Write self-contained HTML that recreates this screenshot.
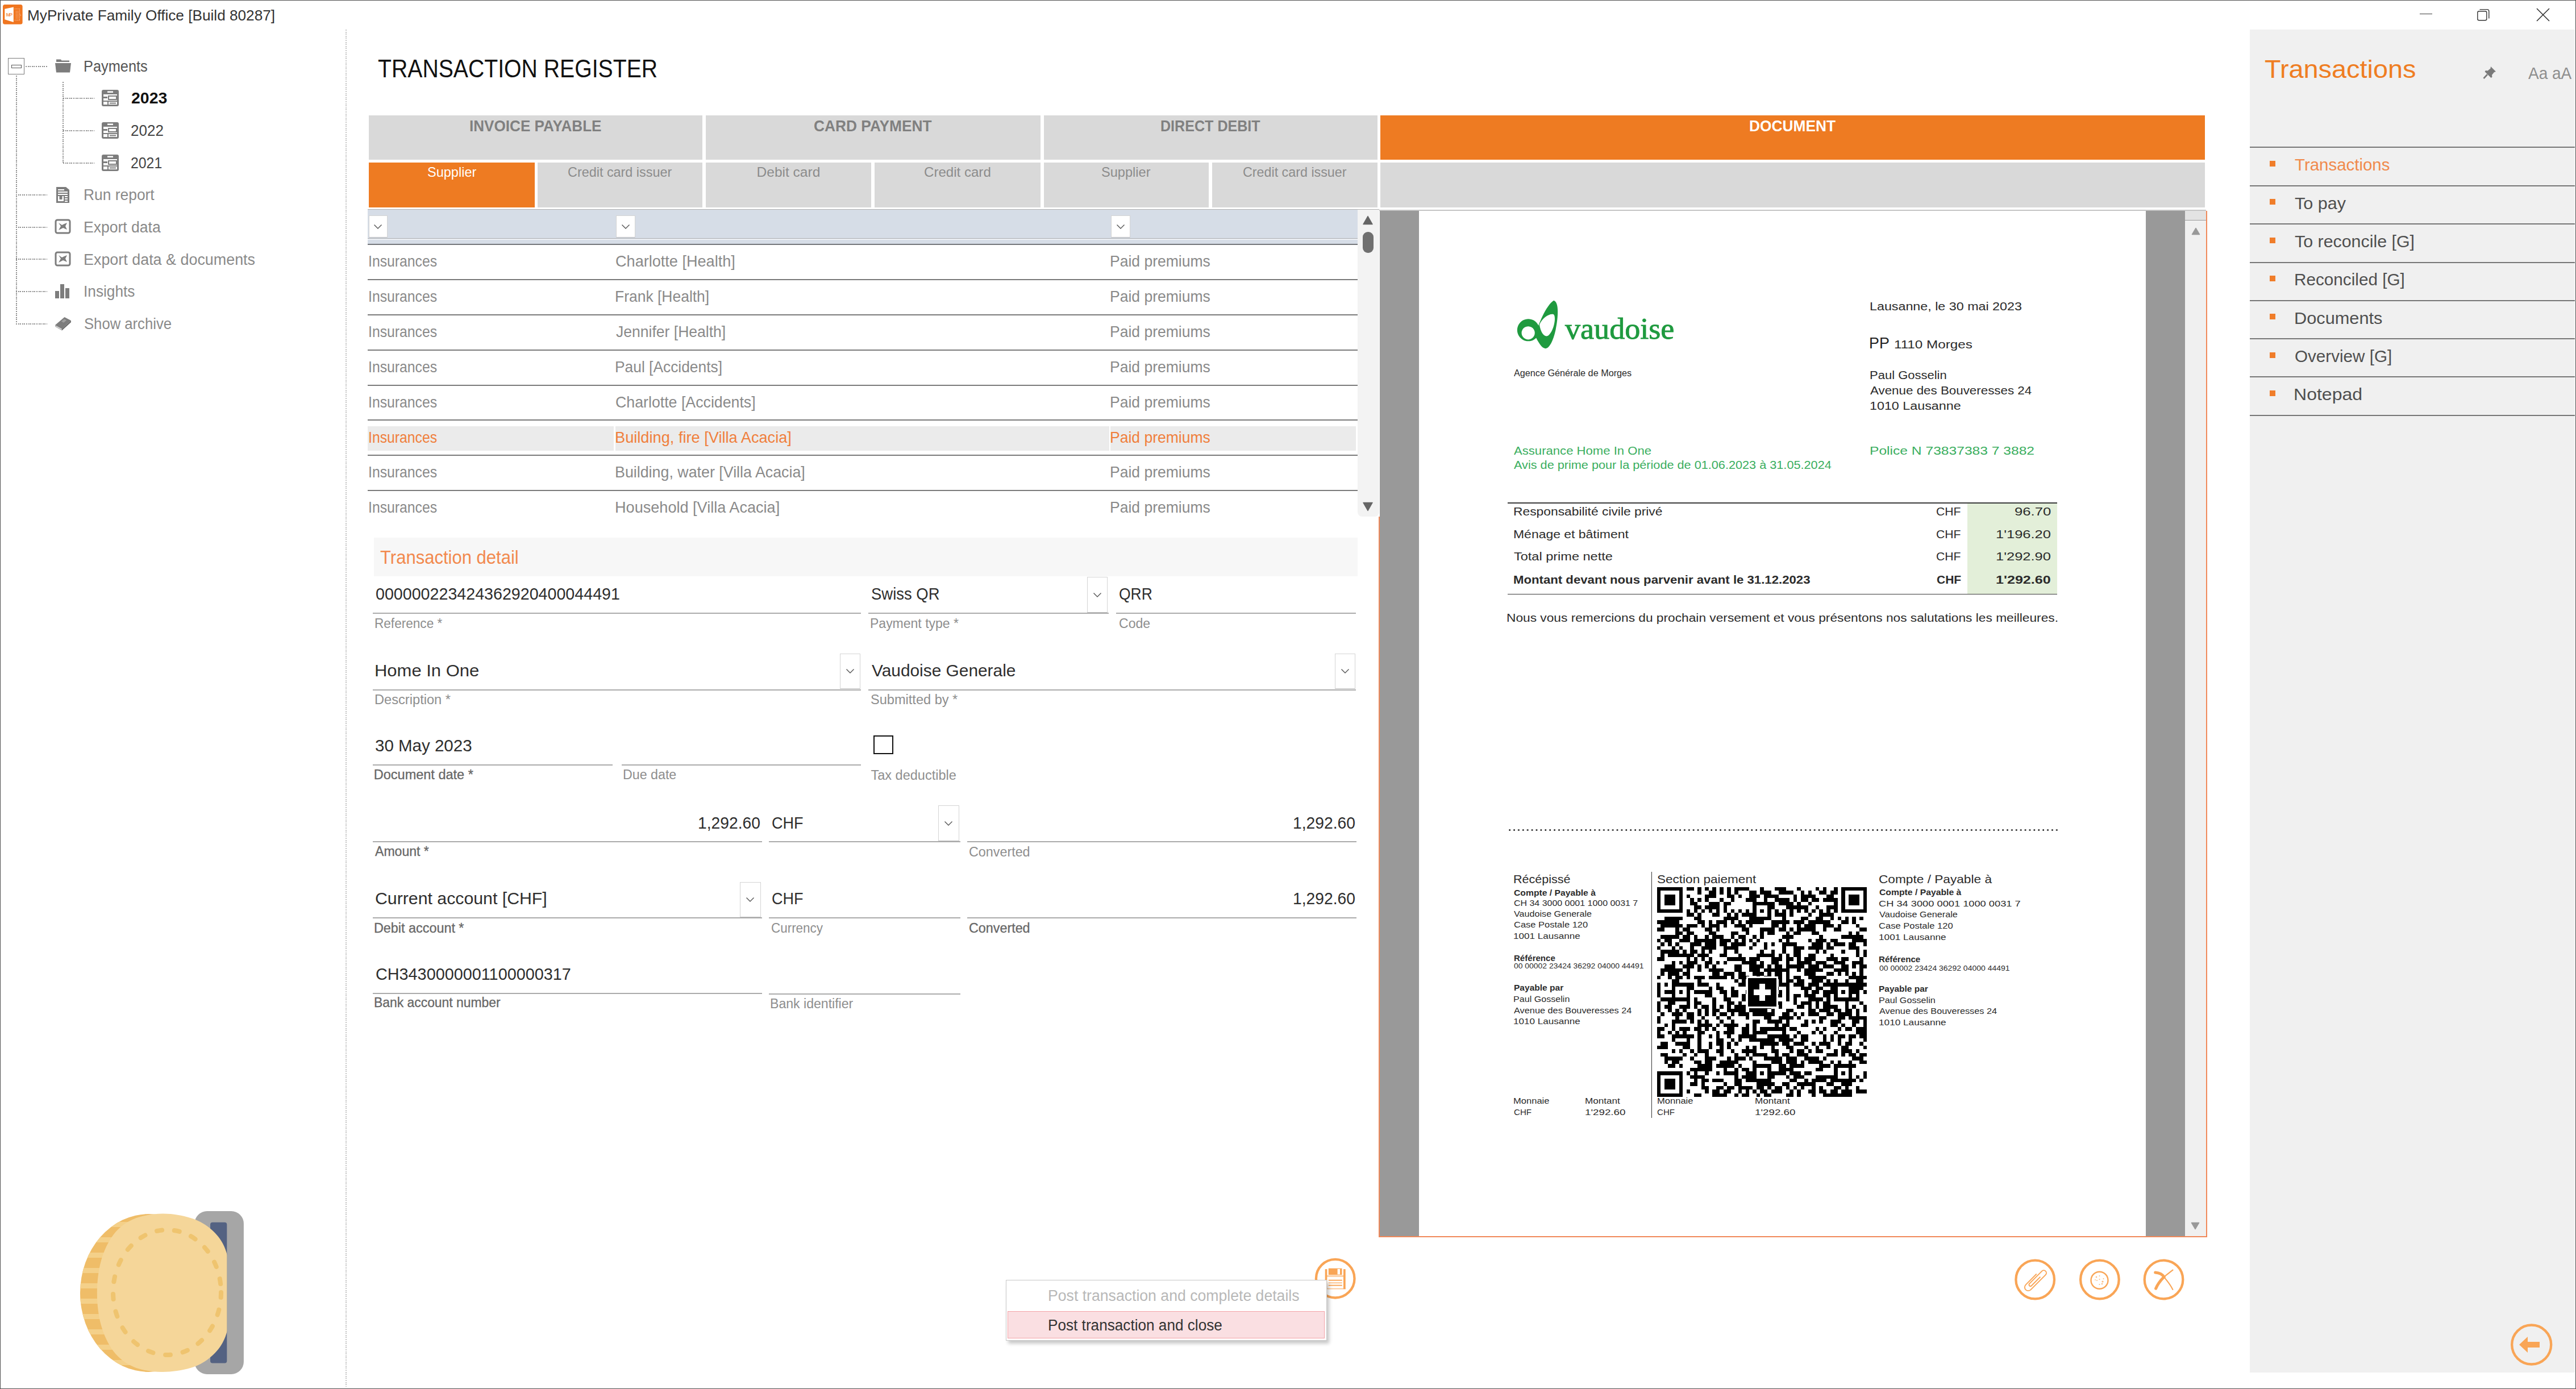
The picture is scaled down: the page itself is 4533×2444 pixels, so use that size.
<!DOCTYPE html><html><head><meta charset="utf-8"><style>
html,body{margin:0;padding:0;background:#fff;}
body{width:4533px;height:2444px;overflow:hidden;position:relative;font-family:"Liberation Sans", sans-serif;}
body div, body svg{position:absolute;}
.t{white-space:nowrap;transform-origin:0 0;}
</style></head><body>
<div style="left:0.0px;top:0.0px;width:4533.0px;height:1.0px;background:#4d4d4d;"></div>
<div style="left:0.0px;top:0.0px;width:1.0px;height:2444.0px;background:#4d4d4d;"></div>
<div style="left:4532.0px;top:0.0px;width:1.0px;height:2444.0px;background:#4d4d4d;"></div>
<div style="left:0.0px;top:2443.0px;width:4533.0px;height:1.0px;background:#4d4d4d;"></div>
<svg style="left:5px;top:8px" width="35" height="35" viewBox="0 0 35 35">
<rect x="0" y="0" width="34.6" height="34.7" rx="3.5" fill="#f07620"/>
<path d="M3.3 7.8 L18.8 4.6 L18.8 31 L3.3 26.2 Z" fill="#fff"/>
<text x="5.6" y="20.8" font-family="Liberation Sans" font-size="9.5" font-weight="700" fill="#f59a5c" textLength="11.6">MP</text>
<path d="M20.6 7.6 H29.4 V27.5 H20.6 M23.5 11 V25 M26.5 11 V25 M29.4 16.5 L31.5 18.7 L29.4 21" fill="none" stroke="#f8b080" stroke-width="1.3" stroke-dasharray="1.6 1"/>
</svg>
<div class="t" style="left:47.9px;top:13.8px;font-size:26px;line-height:26px;color:#333;transform:scaleX(1.0070);">MyPrivate Family Office [Build 80287]</div>
<div style="left:4257.5px;top:24.0px;width:22.1px;height:1.3px;background:#3c3c3c;"></div>
<svg style="left:4355px;top:12px" width="30" height="28" viewBox="0 0 30 28">
<rect x="4.8" y="7.8" width="16" height="16" rx="2.5" fill="none" stroke="#333" stroke-width="1.4"/>
<path d="M8.5 4.6 H21.5 Q24.8 4.6 24.8 8 V20.5" fill="none" stroke="#333" stroke-width="1.4"/>
</svg>
<svg style="left:4460px;top:11px" width="30" height="30" viewBox="0 0 30 30">
<path d="M4 4 L26 26 M26 4 L4 26" stroke="#2a2a2a" stroke-width="1.5"/>
</svg>
<div style="left:14px;top:102px;width:27px;height:27px;border:1.5px solid #7a7a7a;background:#fff"></div>
<div style="left:19.5px;top:114px;width:16px;height:3.5px;border:1.5px solid #555"></div>
<div style="left:45px;top:116px;width:38px;height:2px;background:repeating-linear-gradient(90deg,#8f8f8f 0 2px,transparent 2px 3.6px)"></div>
<div style="left:28px;top:133px;width:2px;height:437px;background:repeating-linear-gradient(180deg,#8f8f8f 0 2px,transparent 2px 3.6px)"></div>
<div style="left:28px;top:342px;width:55px;height:2px;background:repeating-linear-gradient(90deg,#8f8f8f 0 2px,transparent 2px 3.6px)"></div>
<div style="left:28px;top:399px;width:55px;height:2px;background:repeating-linear-gradient(90deg,#8f8f8f 0 2px,transparent 2px 3.6px)"></div>
<div style="left:28px;top:455px;width:55px;height:2px;background:repeating-linear-gradient(90deg,#8f8f8f 0 2px,transparent 2px 3.6px)"></div>
<div style="left:28px;top:512px;width:55px;height:2px;background:repeating-linear-gradient(90deg,#8f8f8f 0 2px,transparent 2px 3.6px)"></div>
<div style="left:28px;top:569px;width:55px;height:2px;background:repeating-linear-gradient(90deg,#8f8f8f 0 2px,transparent 2px 3.6px)"></div>
<div style="left:110px;top:144px;width:2px;height:143px;background:repeating-linear-gradient(180deg,#8f8f8f 0 2px,transparent 2px 3.6px)"></div>
<div style="left:111px;top:172px;width:55px;height:2px;background:repeating-linear-gradient(90deg,#8f8f8f 0 2px,transparent 2px 3.6px)"></div>
<div style="left:111px;top:229px;width:55px;height:2px;background:repeating-linear-gradient(90deg,#8f8f8f 0 2px,transparent 2px 3.6px)"></div>
<div style="left:111px;top:286px;width:55px;height:2px;background:repeating-linear-gradient(90deg,#8f8f8f 0 2px,transparent 2px 3.6px)"></div>
<svg style="left:96px;top:103px" width="30" height="26" viewBox="0 0 30 26">
<path d="M3 1.5 H11 L12.5 3.5 H26 V6 H3 Z" fill="#7d7d7d"/>
<path d="M1 8 H29 L27 24.5 H3 Z" fill="#7d7d7d"/>
</svg>
<svg style="left:178px;top:157.4px" width="32" height="31" viewBox="0 0 32 31">
<rect x="1" y="1" width="30" height="29" rx="3" fill="#7d7d7d"/>
<rect x="4" y="9" width="24" height="18" fill="#fff"/>
<rect x="11" y="3.5" width="10" height="2.5" fill="#fff"/>
<rect x="4" y="13" width="7" height="3" fill="#7d7d7d"/><rect x="13" y="12" width="14" height="6" fill="none" stroke="#7d7d7d" stroke-width="2"/>
<rect x="4" y="20" width="24" height="2" fill="#7d7d7d"/><rect x="11" y="20" width="2" height="7" fill="#7d7d7d"/>
<rect x="15" y="23.5" width="11" height="2" fill="#7d7d7d"/>
</svg>
<svg style="left:178px;top:213.5px" width="32" height="31" viewBox="0 0 32 31">
<rect x="1" y="1" width="30" height="29" rx="3" fill="#7d7d7d"/>
<rect x="4" y="9" width="24" height="18" fill="#fff"/>
<rect x="11" y="3.5" width="10" height="2.5" fill="#fff"/>
<rect x="4" y="13" width="7" height="3" fill="#7d7d7d"/><rect x="13" y="12" width="14" height="6" fill="none" stroke="#7d7d7d" stroke-width="2"/>
<rect x="4" y="20" width="24" height="2" fill="#7d7d7d"/><rect x="11" y="20" width="2" height="7" fill="#7d7d7d"/>
<rect x="15" y="23.5" width="11" height="2" fill="#7d7d7d"/>
</svg>
<svg style="left:178px;top:270.5px" width="32" height="31" viewBox="0 0 32 31">
<rect x="1" y="1" width="30" height="29" rx="3" fill="#7d7d7d"/>
<rect x="4" y="9" width="24" height="18" fill="#fff"/>
<rect x="11" y="3.5" width="10" height="2.5" fill="#fff"/>
<rect x="4" y="13" width="7" height="3" fill="#7d7d7d"/><rect x="13" y="12" width="14" height="6" fill="none" stroke="#7d7d7d" stroke-width="2"/>
<rect x="4" y="20" width="24" height="2" fill="#7d7d7d"/><rect x="11" y="20" width="2" height="7" fill="#7d7d7d"/>
<rect x="15" y="23.5" width="11" height="2" fill="#7d7d7d"/>
</svg>
<svg style="left:96px;top:328px" width="30" height="30" viewBox="0 0 30 30">
<path d="M3 1 H20 L26 6 V29 H3 Z" fill="#7d7d7d"/>
<rect x="6" y="5" width="11" height="2" fill="#fff"/><rect x="6" y="9" width="17" height="2" fill="#fff"/><rect x="6" y="13" width="17" height="2" fill="#fff"/>
<rect x="6" y="17" width="10" height="9" fill="#fff"/><rect x="8.5" y="17" width="5" height="6" fill="#7d7d7d"/>
<rect x="18" y="17" width="5" height="2" fill="#fff"/><rect x="18" y="21" width="5" height="2" fill="#fff"/><rect x="18" y="25" width="5" height="2" fill="#fff"/>
</svg>
<svg style="left:96px;top:385.4px" width="30" height="28" viewBox="0 0 30 28">
<rect x="2" y="2" width="25" height="23" rx="3" fill="none" stroke="#7d7d7d" stroke-width="3"/>
<path d="M7 7 L13 11 L17 9 L22 7 L19 13 L22 19 L15 16 L7 20 L11 13 Z" fill="#7d7d7d"/>
</svg>
<svg style="left:96px;top:442.0px" width="30" height="28" viewBox="0 0 30 28">
<rect x="2" y="2" width="25" height="23" rx="3" fill="none" stroke="#7d7d7d" stroke-width="3"/>
<path d="M7 7 L13 11 L17 9 L22 7 L19 13 L22 19 L15 16 L7 20 L11 13 Z" fill="#7d7d7d"/>
</svg>
<svg style="left:96px;top:499px" width="30" height="27" viewBox="0 0 30 27">
<rect x="1" y="13" width="7" height="13" fill="#7d7d7d"/><rect x="10" y="1" width="7" height="25" fill="#7d7d7d"/><rect x="19" y="8" width="7" height="18" fill="#7d7d7d"/>
</svg>
<svg style="left:95px;top:556px" width="32" height="27" viewBox="0 0 32 27">
<path d="M2 16 L18.5 2 L30 8 L14 22.5 Z" fill="#7d7d7d"/>
<path d="M2 16 L14 22.5 L14 25.5 L2.5 19 Z" fill="#9a9a9a"/>
<path d="M3.5 18.2 L13.5 23.6" stroke="#fff" stroke-width="0.9"/>
<path d="M14 22.5 L30 8 L30 11 L14 25.5 Z" fill="#6a6a6a"/>
<path d="M13 9.5 L18 5.5 L22 7.6 L17 11.8 Z" fill="#a0a0a0"/>
</svg>
<div class="t" style="left:147.4px;top:103.5px;font-size:27px;line-height:27px;color:#555;transform:scaleX(0.9392);">Payments</div>
<div class="t" style="left:230.5px;top:159.9px;font-size:27px;line-height:27px;color:#111;font-weight:700;transform:scaleX(1.0535);">2023</div>
<div class="t" style="left:230.2px;top:216.9px;font-size:27px;line-height:27px;color:#444;transform:scaleX(0.9638);">2022</div>
<div class="t" style="left:230.3px;top:273.5px;font-size:27px;line-height:27px;color:#444;transform:scaleX(0.9185);">2021</div>
<div class="t" style="left:147.1px;top:330.0px;font-size:27px;line-height:27px;color:#8a8a8a;transform:scaleX(0.9773);">Run report</div>
<div class="t" style="left:147.1px;top:387.0px;font-size:27px;line-height:27px;color:#8a8a8a;transform:scaleX(0.9828);">Export data</div>
<div class="t" style="left:147.0px;top:443.5px;font-size:27px;line-height:27px;color:#8a8a8a;transform:scaleX(0.9963);">Export data &amp; documents</div>
<div class="t" style="left:146.8px;top:500.1px;font-size:27px;line-height:27px;color:#8a8a8a;transform:scaleX(0.9717);">Insights</div>
<div class="t" style="left:148.0px;top:556.5px;font-size:27px;line-height:27px;color:#8a8a8a;transform:scaleX(0.9501);">Show archive</div>
<div style="left:608px;top:52px;width:2px;height:2388px;background:repeating-linear-gradient(180deg,#c4c4c4 0 2px,transparent 2px 3.6px)"></div>
<div class="t" style="left:665.2px;top:99.3px;font-size:44px;line-height:44px;color:#111;transform:scaleX(0.8907);">TRANSACTION REGISTER</div>
<div style="left:649.0px;top:203.0px;width:587.0px;height:77.5px;background:#d9d9d9;"></div>
<div class="t" style="left:825.9px;top:208.1px;font-size:28px;line-height:28px;color:#808080;font-weight:700;transform:scaleX(0.9320);">INVOICE PAYABLE</div>
<div style="left:1242.0px;top:203.0px;width:589.0px;height:77.5px;background:#d9d9d9;"></div>
<div class="t" style="left:1432.3px;top:208.1px;font-size:28px;line-height:28px;color:#808080;font-weight:700;transform:scaleX(0.9398);">CARD PAYMENT</div>
<div style="left:1837.0px;top:203.0px;width:587.0px;height:77.5px;background:#d9d9d9;"></div>
<div class="t" style="left:2042.0px;top:208.1px;font-size:28px;line-height:28px;color:#808080;font-weight:700;transform:scaleX(0.8963);">DIRECT DEBIT</div>
<div style="left:2429.0px;top:203.0px;width:1451.0px;height:77.5px;background:#ee7b22;"></div>
<div class="t" style="left:3077.8px;top:208.1px;font-size:28px;line-height:28px;color:#fff;font-weight:700;transform:scaleX(0.9398);">DOCUMENT</div>
<div style="left:649.0px;top:286.0px;width:292.0px;height:79.0px;background:#ee7b22;"></div>
<div class="t" style="left:751.5px;top:290.5px;font-size:24.5px;line-height:24.5px;color:#fff;transform:scaleX(0.9601);">Supplier</div>
<div style="left:946.0px;top:286.0px;width:290.0px;height:79.0px;background:#d9d9d9;"></div>
<div class="t" style="left:999.0px;top:290.5px;font-size:24.5px;line-height:24.5px;color:#8c8c8c;transform:scaleX(0.9545);">Credit card issuer</div>
<div style="left:1242.0px;top:286.0px;width:291.0px;height:79.0px;background:#d9d9d9;"></div>
<div class="t" style="left:1331.6px;top:290.5px;font-size:24.5px;line-height:24.5px;color:#8c8c8c;">Debit card</div>
<div style="left:1539.0px;top:286.0px;width:292.0px;height:79.0px;background:#d9d9d9;"></div>
<div class="t" style="left:1626.3px;top:290.5px;font-size:24.5px;line-height:24.5px;color:#8c8c8c;transform:scaleX(0.9830);">Credit card</div>
<div style="left:1837.0px;top:286.0px;width:290.0px;height:79.0px;background:#d9d9d9;"></div>
<div class="t" style="left:1938.4px;top:290.5px;font-size:24.5px;line-height:24.5px;color:#8c8c8c;transform:scaleX(0.9624);">Supplier</div>
<div style="left:2133.0px;top:286.0px;width:291.0px;height:79.0px;background:#d9d9d9;"></div>
<div class="t" style="left:2186.8px;top:290.5px;font-size:24.5px;line-height:24.5px;color:#8c8c8c;transform:scaleX(0.9508);">Credit card issuer</div>
<div style="left:2429.0px;top:286.0px;width:1451.0px;height:79.0px;background:#d9d9d9;"></div>
<div style="left:647.0px;top:368.0px;width:1780.0px;height:1.2px;background:#b0b0b0;"></div>
<div style="left:647.0px;top:369.0px;width:1742.0px;height:50.0px;background:#d6dde7;"></div>
<div style="left:647.0px;top:419.0px;width:1742.0px;height:1.3px;background:#a9acb0;"></div>
<div style="left:647.0px;top:420.3px;width:1742.0px;height:1.7px;background:#eef1f5;"></div>
<div style="left:647.0px;top:422.0px;width:1742.0px;height:7.0px;background:#d6dde7;"></div>
<div style="left:647.0px;top:429.0px;width:1742.0px;height:2.0px;background:#74777b;"></div>
<div style="left:648.5px;top:379.0px;width:31.8px;height:37.0px;background:#fff;border:1px solid #d4d4d4;border-bottom-color:#bdbdbd"></div>
<svg style="left:657.4px;top:393.5px" width="16" height="10" viewBox="0 0 16 10"><path d="M1.5 1.5 L8 8 L14.5 1.5" fill="none" stroke="#555" stroke-width="1.4"/></svg>
<div style="left:1084.0px;top:379.0px;width:31.8px;height:37.0px;background:#fff;border:1px solid #d4d4d4;border-bottom-color:#bdbdbd"></div>
<svg style="left:1092.9px;top:393.5px" width="16" height="10" viewBox="0 0 16 10"><path d="M1.5 1.5 L8 8 L14.5 1.5" fill="none" stroke="#555" stroke-width="1.4"/></svg>
<div style="left:1954.6px;top:379.0px;width:32.2px;height:37.0px;background:#fff;border:1px solid #d4d4d4;border-bottom-color:#bdbdbd"></div>
<svg style="left:1963.7px;top:393.5px" width="16" height="10" viewBox="0 0 16 10"><path d="M1.5 1.5 L8 8 L14.5 1.5" fill="none" stroke="#555" stroke-width="1.4"/></svg>
<div style="left:647.0px;top:491.0px;width:1742.0px;height:2.0px;background:#7a7a7a;"></div>
<div style="left:647.0px;top:553.0px;width:1742.0px;height:2.0px;background:#7a7a7a;"></div>
<div style="left:647.0px;top:615.0px;width:1742.0px;height:2.0px;background:#7a7a7a;"></div>
<div style="left:647.0px;top:677.0px;width:1742.0px;height:2.0px;background:#7a7a7a;"></div>
<div style="left:647.0px;top:738.0px;width:1742.0px;height:2.0px;background:#7a7a7a;"></div>
<div style="left:647.0px;top:800.0px;width:1742.0px;height:2.0px;background:#7a7a7a;"></div>
<div style="left:647.0px;top:862.0px;width:1742.0px;height:2.0px;background:#7a7a7a;"></div>
<div style="left:647.0px;top:750.0px;width:433.0px;height:43.2px;background:#ebebeb;"></div>
<div style="left:1082.6px;top:750.0px;width:869.1px;height:43.2px;background:#ebebeb;"></div>
<div style="left:1953.5px;top:750.0px;width:432.5px;height:43.2px;background:#ebebeb;"></div>
<div class="t" style="left:647.5px;top:445.2px;font-size:28.5px;line-height:28.5px;color:#8a8a8a;transform:scaleX(0.8689);">Insurances</div>
<div class="t" style="left:1083.1px;top:445.2px;font-size:28.5px;line-height:28.5px;color:#8a8a8a;transform:scaleX(0.9505);">Charlotte [Health]</div>
<div class="t" style="left:1953.3px;top:445.2px;font-size:28.5px;line-height:28.5px;color:#8a8a8a;transform:scaleX(0.9303);">Paid premiums</div>
<div class="t" style="left:647.5px;top:507.1px;font-size:28.5px;line-height:28.5px;color:#8a8a8a;transform:scaleX(0.8689);">Insurances</div>
<div class="t" style="left:1082.4px;top:507.1px;font-size:28.5px;line-height:28.5px;color:#8a8a8a;transform:scaleX(0.9284);">Frank [Health]</div>
<div class="t" style="left:1953.3px;top:507.1px;font-size:28.5px;line-height:28.5px;color:#8a8a8a;transform:scaleX(0.9303);">Paid premiums</div>
<div class="t" style="left:647.5px;top:568.9px;font-size:28.5px;line-height:28.5px;color:#8a8a8a;transform:scaleX(0.8689);">Insurances</div>
<div class="t" style="left:1084.1px;top:568.9px;font-size:28.5px;line-height:28.5px;color:#8a8a8a;transform:scaleX(0.9310);">Jennifer [Health]</div>
<div class="t" style="left:1953.3px;top:568.9px;font-size:28.5px;line-height:28.5px;color:#8a8a8a;transform:scaleX(0.9303);">Paid premiums</div>
<div class="t" style="left:647.5px;top:630.8px;font-size:28.5px;line-height:28.5px;color:#8a8a8a;transform:scaleX(0.8689);">Insurances</div>
<div class="t" style="left:1082.4px;top:630.8px;font-size:28.5px;line-height:28.5px;color:#8a8a8a;transform:scaleX(0.9247);">Paul [Accidents]</div>
<div class="t" style="left:1953.3px;top:630.8px;font-size:28.5px;line-height:28.5px;color:#8a8a8a;transform:scaleX(0.9303);">Paid premiums</div>
<div class="t" style="left:647.5px;top:692.6px;font-size:28.5px;line-height:28.5px;color:#8a8a8a;transform:scaleX(0.8689);">Insurances</div>
<div class="t" style="left:1083.2px;top:692.6px;font-size:28.5px;line-height:28.5px;color:#8a8a8a;transform:scaleX(0.9380);">Charlotte [Accidents]</div>
<div class="t" style="left:1953.3px;top:692.6px;font-size:28.5px;line-height:28.5px;color:#8a8a8a;transform:scaleX(0.9303);">Paid premiums</div>
<div class="t" style="left:647.5px;top:754.5px;font-size:28.5px;line-height:28.5px;color:#f07f3c;transform:scaleX(0.8689);">Insurances</div>
<div class="t" style="left:1082.3px;top:754.5px;font-size:28.5px;line-height:28.5px;color:#f07f3c;transform:scaleX(0.9543);">Building, fire [Villa Acacia]</div>
<div class="t" style="left:1953.3px;top:754.5px;font-size:28.5px;line-height:28.5px;color:#f07f3c;transform:scaleX(0.9303);">Paid premiums</div>
<div class="t" style="left:647.5px;top:816.3px;font-size:28.5px;line-height:28.5px;color:#8a8a8a;transform:scaleX(0.8689);">Insurances</div>
<div class="t" style="left:1082.4px;top:816.3px;font-size:28.5px;line-height:28.5px;color:#8a8a8a;transform:scaleX(0.9407);">Building, water [Villa Acacia]</div>
<div class="t" style="left:1953.3px;top:816.3px;font-size:28.5px;line-height:28.5px;color:#8a8a8a;transform:scaleX(0.9303);">Paid premiums</div>
<div class="t" style="left:647.5px;top:878.2px;font-size:28.5px;line-height:28.5px;color:#8a8a8a;transform:scaleX(0.8689);">Insurances</div>
<div class="t" style="left:1082.3px;top:878.2px;font-size:28.5px;line-height:28.5px;color:#8a8a8a;transform:scaleX(0.9506);">Household [Villa Acacia]</div>
<div class="t" style="left:1953.3px;top:878.2px;font-size:28.5px;line-height:28.5px;color:#8a8a8a;transform:scaleX(0.9303);">Paid premiums</div>
<div style="left:2389.0px;top:369.0px;width:37.5px;height:540.0px;background:#f3f3f3;border-radius:0 0 8px 8px;"></div>
<svg style="left:2398px;top:379px" width="18" height="17" viewBox="0 0 18 17"><path d="M9 1.5 L17 15.5 H1 Z" fill="#666" stroke="#666" stroke-width="1.5" stroke-linejoin="round"/></svg>
<div style="left:2398.0px;top:408.0px;width:18.5px;height:36.5px;background:#707070;border-radius:9px;"></div>
<svg style="left:2398px;top:883px" width="18" height="17" viewBox="0 0 18 17"><path d="M9 15.5 L17 1.5 H1 Z" fill="#666" stroke="#666" stroke-width="1.5" stroke-linejoin="round"/></svg>
<div style="left:657.5px;top:945.7px;width:1731.5px;height:68.3px;background:#f7f7f7;"></div>
<div class="t" style="left:669.1px;top:962.6px;font-size:34px;line-height:34px;color:#f2894d;transform:scaleX(0.9123);">Transaction detail</div>
<div style="left:655.7px;top:1078.0px;width:859.6px;height:2.0px;background:#ababab;"></div>
<div style="left:1528.0px;top:1078.0px;width:422.7px;height:2.0px;background:#ababab;"></div>
<div style="left:1964.0px;top:1078.0px;width:422.4px;height:2.0px;background:#ababab;"></div>
<div style="left:1913.0px;top:1015.0px;width:34.0px;height:61.0px;background:#fff;border:1px solid #d4d4d4;border-bottom-color:#bdbdbd"></div>
<svg style="left:1923.0px;top:1041.5px" width="16" height="10" viewBox="0 0 16 10"><path d="M1.5 1.5 L8 8 L14.5 1.5" fill="none" stroke="#555" stroke-width="1.4"/></svg>
<div class="t" style="left:660.6px;top:1030.0px;font-size:30px;line-height:30px;color:#2e2e2e;transform:scaleX(0.9543);">000000223424362920400044491</div>
<div class="t" style="left:1533.1px;top:1030.0px;font-size:30px;line-height:30px;color:#2e2e2e;transform:scaleX(0.9150);">Swiss QR</div>
<div class="t" style="left:1968.8px;top:1030.0px;font-size:30px;line-height:30px;color:#2e2e2e;transform:scaleX(0.8826);">QRR</div>
<div class="t" style="left:659.2px;top:1086.4px;font-size:23.5px;line-height:23.5px;color:#8e8e8e;transform:scaleX(0.9611);">Reference *</div>
<div class="t" style="left:1531.2px;top:1086.4px;font-size:23.5px;line-height:23.5px;color:#8e8e8e;transform:scaleX(0.9785);">Payment type *</div>
<div class="t" style="left:1968.8px;top:1086.4px;font-size:23.5px;line-height:23.5px;color:#8e8e8e;transform:scaleX(0.9809);">Code</div>
<div style="left:655.7px;top:1213.0px;width:859.6px;height:2.0px;background:#ababab;"></div>
<div style="left:1528.0px;top:1213.0px;width:858.4px;height:2.0px;background:#ababab;"></div>
<div style="left:1478.0px;top:1150.0px;width:33.5px;height:60.0px;background:#fff;border:1px solid #d4d4d4;border-bottom-color:#bdbdbd"></div>
<svg style="left:1487.8px;top:1176.0px" width="16" height="10" viewBox="0 0 16 10"><path d="M1.5 1.5 L8 8 L14.5 1.5" fill="none" stroke="#555" stroke-width="1.4"/></svg>
<div style="left:2348.6px;top:1150.0px;width:34.4px;height:60.0px;background:#fff;border:1px solid #d4d4d4;border-bottom-color:#bdbdbd"></div>
<svg style="left:2358.8px;top:1176.0px" width="16" height="10" viewBox="0 0 16 10"><path d="M1.5 1.5 L8 8 L14.5 1.5" fill="none" stroke="#555" stroke-width="1.4"/></svg>
<div class="t" style="left:659.2px;top:1165.0px;font-size:30px;line-height:30px;color:#2e2e2e;transform:scaleX(1.0326);">Home In One</div>
<div class="t" style="left:1533.9px;top:1165.0px;font-size:30px;line-height:30px;color:#2e2e2e;transform:scaleX(0.9951);">Vaudoise Generale</div>
<div class="t" style="left:659.1px;top:1219.9px;font-size:23.5px;line-height:23.5px;color:#8e8e8e;transform:scaleX(1.0061);">Description *</div>
<div class="t" style="left:1531.9px;top:1219.9px;font-size:23.5px;line-height:23.5px;color:#8e8e8e;transform:scaleX(1.0030);">Submitted by *</div>
<div style="left:655.7px;top:1345.0px;width:422.8px;height:2.0px;background:#ababab;"></div>
<div style="left:1093.5px;top:1345.0px;width:421.8px;height:2.0px;background:#ababab;"></div>
<div style="left:1537px;top:1293.6px;width:31px;height:29px;border:2.2px solid #111;background:#fff"></div>
<div class="t" style="left:660.4px;top:1297.2px;font-size:30px;line-height:30px;color:#2e2e2e;transform:scaleX(0.9833);">30 May 2023</div>
<div class="t" style="left:657.8px;top:1352.4px;font-size:23.5px;line-height:23.5px;color:#686868;-webkit-text-stroke:0.35px #686868;">Document date *</div>
<div class="t" style="left:1095.7px;top:1352.4px;font-size:23.5px;line-height:23.5px;color:#8e8e8e;transform:scaleX(0.9884);">Due date</div>
<div class="t" style="left:1532.5px;top:1352.9px;font-size:23.5px;line-height:23.5px;color:#8e8e8e;">Tax deductible</div>
<div style="left:655.7px;top:1480.0px;width:684.9px;height:2.0px;background:#ababab;"></div>
<div style="left:1353.0px;top:1480.0px;width:337.0px;height:2.0px;background:#ababab;"></div>
<div style="left:1702.0px;top:1480.0px;width:685.3px;height:2.0px;background:#ababab;"></div>
<div style="left:1650.7px;top:1417.0px;width:35.0px;height:61.0px;background:#fff;border:1px solid #d4d4d4;border-bottom-color:#bdbdbd"></div>
<svg style="left:1661.2px;top:1443.5px" width="16" height="10" viewBox="0 0 16 10"><path d="M1.5 1.5 L8 8 L14.5 1.5" fill="none" stroke="#555" stroke-width="1.4"/></svg>
<div class="t" style="left:1228.3px;top:1432.5px;font-size:30px;line-height:30px;color:#2e2e2e;transform:scaleX(0.9413);">1,292.60</div>
<div class="t" style="left:1357.6px;top:1432.5px;font-size:30px;line-height:30px;color:#2e2e2e;transform:scaleX(0.9008);">CHF</div>
<div class="t" style="left:2274.5px;top:1432.5px;font-size:30px;line-height:30px;color:#2e2e2e;transform:scaleX(0.9413);">1,292.60</div>
<div class="t" style="left:659.6px;top:1487.4px;font-size:23.5px;line-height:23.5px;color:#686868;transform:scaleX(0.9811);-webkit-text-stroke:0.35px #686868;">Amount *</div>
<div class="t" style="left:1704.8px;top:1488.2px;font-size:23.5px;line-height:23.5px;color:#8e8e8e;transform:scaleX(0.9920);">Converted</div>
<div style="left:655.7px;top:1614.0px;width:684.9px;height:2.0px;background:#ababab;"></div>
<div style="left:1353.0px;top:1614.0px;width:337.0px;height:2.0px;background:#ababab;"></div>
<div style="left:1702.0px;top:1614.0px;width:685.3px;height:2.0px;background:#ababab;"></div>
<div style="left:1302.0px;top:1551.7px;width:34.8px;height:60.3px;background:#fff;border:1px solid #d4d4d4;border-bottom-color:#bdbdbd"></div>
<svg style="left:1312.4px;top:1577.8px" width="16" height="10" viewBox="0 0 16 10"><path d="M1.5 1.5 L8 8 L14.5 1.5" fill="none" stroke="#555" stroke-width="1.4"/></svg>
<div class="t" style="left:660.2px;top:1566.0px;font-size:30px;line-height:30px;color:#2e2e2e;transform:scaleX(1.0088);">Current account [CHF]</div>
<div class="t" style="left:1357.6px;top:1566.4px;font-size:30px;line-height:30px;color:#2e2e2e;transform:scaleX(0.9008);">CHF</div>
<div class="t" style="left:2274.5px;top:1566.4px;font-size:30px;line-height:30px;color:#2e2e2e;transform:scaleX(0.9413);">1,292.60</div>
<div class="t" style="left:657.8px;top:1621.9px;font-size:23.5px;line-height:23.5px;color:#686868;transform:scaleX(0.9943);-webkit-text-stroke:0.35px #686868;">Debit account *</div>
<div class="t" style="left:1356.9px;top:1622.4px;font-size:23.5px;line-height:23.5px;color:#8e8e8e;transform:scaleX(0.9543);">Currency</div>
<div class="t" style="left:1704.8px;top:1622.4px;font-size:23.5px;line-height:23.5px;color:#686868;transform:scaleX(0.9920);-webkit-text-stroke:0.35px #686868;">Converted</div>
<div style="left:656.0px;top:1747.0px;width:684.8px;height:2.0px;background:#ababab;"></div>
<div style="left:1353.0px;top:1748.0px;width:337.0px;height:2.0px;background:#ababab;"></div>
<div class="t" style="left:660.6px;top:1699.0px;font-size:30px;line-height:30px;color:#2e2e2e;transform:scaleX(0.9599);">CH3430000001100000317</div>
<div class="t" style="left:658.2px;top:1753.4px;font-size:23.5px;line-height:23.5px;color:#686868;transform:scaleX(0.9739);-webkit-text-stroke:0.35px #686868;">Bank account number</div>
<div class="t" style="left:1355.2px;top:1754.9px;font-size:23.5px;line-height:23.5px;color:#8e8e8e;transform:scaleX(0.9820);">Bank identifier</div>
<div style="left:2427.0px;top:369.2px;width:1455.0px;height:1.6px;background:#c4c4c4;"></div>
<div style="left:2427.5px;top:370.8px;width:69.2px;height:1804.8px;background:#999999;"></div>
<div style="left:3776.0px;top:370.8px;width:69.0px;height:1804.8px;background:#999999;"></div>
<div style="left:3845.0px;top:370.8px;width:37.0px;height:1804.8px;background:#f0f0f0;"></div>
<div style="left:3845.0px;top:370.8px;width:37.0px;height:16.7px;background:#e3e3e3;border-bottom:1px solid #9a9a9a;"></div>
<svg style="left:3856px;top:400px" width="16" height="14" viewBox="0 0 16 14"><path d="M8 1.5 L14.5 12.5 H1.5 Z" fill="#999" stroke="#999" stroke-width="1.5" stroke-linejoin="round"/></svg>
<svg style="left:3855px;top:2150px" width="16" height="14" viewBox="0 0 16 14"><path d="M8 12.5 L14.5 1.5 H1.5 Z" fill="#999" stroke="#999" stroke-width="1.5" stroke-linejoin="round"/></svg>
<div style="left:2426.0px;top:909.0px;width:1.6px;height:1268.0px;background:#f0895a;"></div>
<div style="left:2426.0px;top:2175.4px;width:1458.0px;height:1.6px;background:#f0895a;"></div>
<div style="left:3882.0px;top:370.8px;width:2.0px;height:1806.2px;background:#f0895a;"></div>
<svg style="left:2660px;top:520px" width="300" height="100" viewBox="0 0 2576 859">
<path fill-rule="evenodd" fill="#1f9a3f" d="M252 354 A168 168 0 1 1 251.9 354 Z M250 465 A100 100 0 1 0 250.1 465 Z"/>
<path fill-rule="evenodd" fill="#1f9a3f" d="M635 75 C720 95 705 330 665 520 C625 700 565 800 512 800 C455 800 400 700 355 610 C400 440 520 150 635 75 Z M420 440 C460 340 575 265 635 285 C675 320 645 520 560 600 C505 645 440 570 420 440 Z"/>
</svg>
<div class="t" style="left:2753.7px;top:552.0px;font-size:53px;line-height:53px;color:#1f9a3f;font-family:'Liberation Serif', serif;transform:scaleX(1.0211);-webkit-text-stroke:0.9px #1f9a3f;">vaudoise</div>
<div class="t" style="left:2664.2px;top:648.6px;font-size:16px;line-height:16px;color:#2b2b2b;transform:scaleX(1.0127);">Agence Générale de Morges</div>
<div class="t" style="left:3289.6px;top:528.9px;font-size:20px;line-height:20px;color:#2b2b2b;transform:scaleX(1.1638);">Lausanne, le 30 mai 2023</div>
<div class="t" style="left:3289.4px;top:589.5px;font-size:28px;line-height:28px;color:#222;transform:scaleX(0.9583);">PP</div>
<div class="t" style="left:3333.0px;top:595.4px;font-size:21px;line-height:21px;color:#2b2b2b;transform:scaleX(1.1538);">1110 Morges</div>
<div class="t" style="left:3289.7px;top:650.3px;font-size:20px;line-height:20px;color:#2b2b2b;transform:scaleX(1.0996);">Paul Gosselin</div>
<div class="t" style="left:3291.4px;top:677.3px;font-size:20px;line-height:20px;color:#2b2b2b;transform:scaleX(1.1179);">Avenue des Bouveresses 24</div>
<div class="t" style="left:3289.8px;top:704.0px;font-size:20px;line-height:20px;color:#2b2b2b;transform:scaleX(1.1646);">1010 Lausanne</div>
<div class="t" style="left:2663.9px;top:782.9px;font-size:20.5px;line-height:20.5px;color:#3aae5e;transform:scaleX(1.0785);">Assurance Home In One</div>
<div class="t" style="left:2663.9px;top:808.1px;font-size:20.5px;line-height:20.5px;color:#3aae5e;transform:scaleX(1.0573);">Avis de prime pour la période de 01.06.2023 à 31.05.2024</div>
<div class="t" style="left:3289.5px;top:782.9px;font-size:20.5px;line-height:20.5px;color:#3aae5e;transform:scaleX(1.2004);">Police N 73837383 7 3882</div>
<div style="left:3462.0px;top:885.0px;width:158.0px;height:160.0px;background:#e3efd9;"></div>
<div style="left:2652.7px;top:884.0px;width:967.3px;height:1.6px;background:#3a3a3a;"></div>
<div style="left:2652.7px;top:1044.8px;width:967.3px;height:1.6px;background:#3a3a3a;"></div>
<div class="t" style="left:2662.7px;top:890.3px;font-size:20px;line-height:20px;color:#2b2b2b;transform:scaleX(1.1406);">Responsabilité civile privé</div>
<div class="t" style="left:3407.3px;top:890.3px;font-size:20px;line-height:20px;color:#2b2b2b;transform:scaleX(1.0585);">CHF</div>
<div class="t" style="left:3544.8px;top:890.3px;font-size:20px;line-height:20px;color:#2b2b2b;transform:scaleX(1.2836);">96.70</div>
<div class="t" style="left:2662.7px;top:930.3px;font-size:20px;line-height:20px;color:#2b2b2b;transform:scaleX(1.1474);">Ménage et bâtiment</div>
<div class="t" style="left:3407.3px;top:930.3px;font-size:20px;line-height:20px;color:#2b2b2b;transform:scaleX(1.0585);">CHF</div>
<div class="t" style="left:3512.1px;top:930.3px;font-size:20px;line-height:20px;color:#2b2b2b;transform:scaleX(1.2737);">1'196.20</div>
<div class="t" style="left:2664.0px;top:969.3px;font-size:20px;line-height:20px;color:#2b2b2b;transform:scaleX(1.1754);">Total prime nette</div>
<div class="t" style="left:3407.3px;top:969.3px;font-size:20px;line-height:20px;color:#2b2b2b;transform:scaleX(1.0585);">CHF</div>
<div class="t" style="left:3512.1px;top:969.3px;font-size:20px;line-height:20px;color:#2b2b2b;transform:scaleX(1.2737);">1'292.90</div>
<div class="t" style="left:2663.1px;top:1010.0px;font-size:20px;line-height:20px;color:#2b2b2b;font-weight:700;transform:scaleX(1.1087);">Montant devant nous parvenir avant le 31.12.2023</div>
<div class="t" style="left:3407.6px;top:1010.0px;font-size:20px;line-height:20px;color:#2b2b2b;font-weight:700;transform:scaleX(1.0505);">CHF</div>
<div class="t" style="left:3512.4px;top:1010.0px;font-size:20px;line-height:20px;color:#2b2b2b;font-weight:700;transform:scaleX(1.2550);">1'292.60</div>
<div class="t" style="left:2651.2px;top:1076.6px;font-size:20px;line-height:20px;color:#2b2b2b;transform:scaleX(1.1358);">Nous vous remercions du prochain versement et vous présentons nos salutations les meilleures.</div>
<div style="left:2654.8px;top:1459.3px;width:966px;height:3px;background:radial-gradient(circle at 1.7px 1.5px,#333 1.2px,rgba(51,51,51,0) 1.75px);background-size:7.9px 3px"></div>
<div style="left:2905.8px;top:1533.8px;width:1.4px;height:432.8px;background:#333;"></div>
<div class="t" style="left:2662.8px;top:1536.1px;font-size:21px;line-height:21px;color:#2b2b2b;transform:scaleX(1.0247);">Récépissé</div>
<div class="t" style="left:2663.9px;top:1563.2px;font-size:15px;line-height:15px;color:#2b2b2b;font-weight:700;transform:scaleX(1.0465);">Compte / Payable à</div>
<div class="t" style="left:2663.7px;top:1580.7px;font-size:15px;line-height:15px;color:#2b2b2b;transform:scaleX(1.0637);">CH 34 3000 0001 1000 0031 7</div>
<div class="t" style="left:2664.4px;top:1599.7px;font-size:15px;line-height:15px;color:#2b2b2b;transform:scaleX(1.0765);">Vaudoise Generale</div>
<div class="t" style="left:2663.7px;top:1618.7px;font-size:15px;line-height:15px;color:#2b2b2b;transform:scaleX(1.0993);">Case Postale 120</div>
<div class="t" style="left:2663.2px;top:1638.5px;font-size:15px;line-height:15px;color:#2b2b2b;transform:scaleX(1.1375);">1001 Lausanne</div>
<div class="t" style="left:2663.5px;top:1678.1px;font-size:15px;line-height:15px;color:#2b2b2b;font-weight:700;transform:scaleX(1.0039);">Référence</div>
<div class="t" style="left:2663.9px;top:1694.0px;font-size:12px;line-height:12px;color:#2b2b2b;transform:scaleX(1.1610);">00 00002 23424 36292 04000 44491</div>
<div class="t" style="left:2663.5px;top:1730.4px;font-size:15px;line-height:15px;color:#2b2b2b;font-weight:700;transform:scaleX(1.0358);">Payable par</div>
<div class="t" style="left:2663.2px;top:1750.2px;font-size:15px;line-height:15px;color:#2b2b2b;transform:scaleX(1.0733);">Paul Gosselin</div>
<div class="t" style="left:2664.4px;top:1770.0px;font-size:15px;line-height:15px;color:#2b2b2b;transform:scaleX(1.0872);">Avenue des Bouveresses 24</div>
<div class="t" style="left:2663.2px;top:1789.0px;font-size:15px;line-height:15px;color:#2b2b2b;transform:scaleX(1.1375);">1010 Lausanne</div>
<div class="t" style="left:2663.2px;top:1929.2px;font-size:15px;line-height:15px;color:#2b2b2b;transform:scaleX(1.1033);">Monnaie</div>
<div class="t" style="left:2789.0px;top:1929.2px;font-size:15px;line-height:15px;color:#2b2b2b;transform:scaleX(1.1385);">Montant</div>
<div class="t" style="left:2663.7px;top:1949.0px;font-size:15px;line-height:15px;color:#2b2b2b;transform:scaleX(1.0076);">CHF</div>
<div class="t" style="left:2789.0px;top:1949.0px;font-size:15px;line-height:15px;color:#2b2b2b;transform:scaleX(1.2520);">1'292.60</div>
<div class="t" style="left:2916.0px;top:1536.1px;font-size:21px;line-height:21px;color:#2b2b2b;transform:scaleX(1.0734);">Section paiement</div>
<svg style="left:2916px;top:1560.7px" width="369.4" height="369.4" viewBox="0 0 369.4 369.4" shape-rendering="crispEdges"><path d="M0.00 0.00h45.36v6.48h-45.36zM51.85 0.00h12.96v6.48h-12.96zM71.29 0.00h6.48v6.48h-6.48zM84.25 0.00h6.48v6.48h-6.48zM97.21 0.00h6.48v6.48h-6.48zM110.17 0.00h6.48v6.48h-6.48zM123.13 0.00h6.48v6.48h-6.48zM136.09 0.00h25.92v6.48h-25.92zM181.46 0.00h6.48v6.48h-6.48zM207.38 0.00h19.44v6.48h-19.44zM246.27 0.00h6.48v6.48h-6.48zM278.67 0.00h6.48v6.48h-6.48zM291.63 0.00h6.48v6.48h-6.48zM311.07 0.00h6.48v6.48h-6.48zM324.04 0.00h45.36v6.48h-45.36zM0.00 6.48h6.48v6.48h-6.48zM38.88 6.48h6.48v6.48h-6.48zM71.29 6.48h6.48v6.48h-6.48zM90.73 6.48h12.96v6.48h-12.96zM110.17 6.48h6.48v6.48h-6.48zM123.13 6.48h6.48v6.48h-6.48zM136.09 6.48h6.48v6.48h-6.48zM162.02 6.48h12.96v6.48h-12.96zM181.46 6.48h19.44v6.48h-19.44zM213.86 6.48h25.92v6.48h-25.92zM252.75 6.48h6.48v6.48h-6.48zM265.71 6.48h6.48v6.48h-6.48zM285.15 6.48h12.96v6.48h-12.96zM304.59 6.48h12.96v6.48h-12.96zM324.04 6.48h6.48v6.48h-6.48zM362.92 6.48h6.48v6.48h-6.48zM0.00 12.96h6.48v6.48h-6.48zM12.96 12.96h19.44v6.48h-19.44zM38.88 12.96h6.48v6.48h-6.48zM51.85 12.96h6.48v6.48h-6.48zM84.25 12.96h19.44v6.48h-19.44zM123.13 12.96h12.96v6.48h-12.96zM142.58 12.96h6.48v6.48h-6.48zM162.02 12.96h19.44v6.48h-19.44zM187.94 12.96h25.92v6.48h-25.92zM239.79 12.96h6.48v6.48h-6.48zM252.75 12.96h25.92v6.48h-25.92zM298.11 12.96h12.96v6.48h-12.96zM324.04 12.96h6.48v6.48h-6.48zM337.00 12.96h19.44v6.48h-19.44zM362.92 12.96h6.48v6.48h-6.48zM0.00 19.44h6.48v6.48h-6.48zM12.96 19.44h19.44v6.48h-19.44zM38.88 19.44h6.48v6.48h-6.48zM58.33 19.44h6.48v6.48h-6.48zM71.29 19.44h6.48v6.48h-6.48zM84.25 19.44h6.48v6.48h-6.48zM110.17 19.44h6.48v6.48h-6.48zM129.61 19.44h6.48v6.48h-6.48zM155.54 19.44h19.44v6.48h-19.44zM187.94 19.44h6.48v6.48h-6.48zM207.38 19.44h25.92v6.48h-25.92zM239.79 19.44h6.48v6.48h-6.48zM252.75 19.44h12.96v6.48h-12.96zM272.19 19.44h12.96v6.48h-12.96zM291.63 19.44h25.92v6.48h-25.92zM324.04 19.44h6.48v6.48h-6.48zM337.00 19.44h19.44v6.48h-19.44zM362.92 19.44h6.48v6.48h-6.48zM0.00 25.92h6.48v6.48h-6.48zM12.96 25.92h19.44v6.48h-19.44zM38.88 25.92h6.48v6.48h-6.48zM58.33 25.92h12.96v6.48h-12.96zM90.73 25.92h19.44v6.48h-19.44zM116.65 25.92h12.96v6.48h-12.96zM168.50 25.92h38.88v6.48h-38.88zM213.86 25.92h25.92v6.48h-25.92zM246.27 25.92h6.48v6.48h-6.48zM265.71 25.92h6.48v6.48h-6.48zM311.07 25.92h6.48v6.48h-6.48zM324.04 25.92h6.48v6.48h-6.48zM337.00 25.92h19.44v6.48h-19.44zM362.92 25.92h6.48v6.48h-6.48zM0.00 32.40h6.48v6.48h-6.48zM38.88 32.40h6.48v6.48h-6.48zM64.81 32.40h12.96v6.48h-12.96zM84.25 32.40h25.92v6.48h-25.92zM116.65 32.40h6.48v6.48h-6.48zM168.50 32.40h6.48v6.48h-6.48zM194.42 32.40h12.96v6.48h-12.96zM226.82 32.40h38.88v6.48h-38.88zM278.67 32.40h6.48v6.48h-6.48zM298.11 32.40h19.44v6.48h-19.44zM324.04 32.40h6.48v6.48h-6.48zM362.92 32.40h6.48v6.48h-6.48zM0.00 38.88h45.36v6.48h-45.36zM51.85 38.88h6.48v6.48h-6.48zM64.81 38.88h6.48v6.48h-6.48zM77.77 38.88h6.48v6.48h-6.48zM90.73 38.88h6.48v6.48h-6.48zM103.69 38.88h6.48v6.48h-6.48zM116.65 38.88h6.48v6.48h-6.48zM129.61 38.88h6.48v6.48h-6.48zM142.58 38.88h6.48v6.48h-6.48zM155.54 38.88h6.48v6.48h-6.48zM168.50 38.88h6.48v6.48h-6.48zM181.46 38.88h6.48v6.48h-6.48zM194.42 38.88h6.48v6.48h-6.48zM207.38 38.88h6.48v6.48h-6.48zM220.34 38.88h6.48v6.48h-6.48zM233.31 38.88h6.48v6.48h-6.48zM246.27 38.88h6.48v6.48h-6.48zM259.23 38.88h6.48v6.48h-6.48zM272.19 38.88h6.48v6.48h-6.48zM285.15 38.88h6.48v6.48h-6.48zM298.11 38.88h6.48v6.48h-6.48zM311.07 38.88h6.48v6.48h-6.48zM324.04 38.88h45.36v6.48h-45.36zM51.85 45.36h12.96v6.48h-12.96zM71.29 45.36h6.48v6.48h-6.48zM97.21 45.36h12.96v6.48h-12.96zM123.13 45.36h6.48v6.48h-6.48zM136.09 45.36h6.48v6.48h-6.48zM149.06 45.36h25.92v6.48h-25.92zM194.42 45.36h6.48v6.48h-6.48zM207.38 45.36h19.44v6.48h-19.44zM233.31 45.36h6.48v6.48h-6.48zM265.71 45.36h6.48v6.48h-6.48zM285.15 45.36h25.92v6.48h-25.92zM12.96 51.85h32.40v6.48h-32.40zM64.81 51.85h12.96v6.48h-12.96zM116.65 51.85h25.92v6.48h-25.92zM162.02 51.85h38.88v6.48h-38.88zM220.34 51.85h6.48v6.48h-6.48zM252.75 51.85h12.96v6.48h-12.96zM278.67 51.85h12.96v6.48h-12.96zM304.59 51.85h6.48v6.48h-6.48zM317.55 51.85h6.48v6.48h-6.48zM330.52 51.85h6.48v6.48h-6.48zM343.48 51.85h6.48v6.48h-6.48zM356.44 51.85h6.48v6.48h-6.48zM0.00 58.33h38.88v6.48h-38.88zM71.29 58.33h12.96v6.48h-12.96zM90.73 58.33h6.48v6.48h-6.48zM103.69 58.33h19.44v6.48h-19.44zM129.61 58.33h6.48v6.48h-6.48zM142.58 58.33h6.48v6.48h-6.48zM155.54 58.33h32.40v6.48h-32.40zM200.90 58.33h32.40v6.48h-32.40zM239.79 58.33h19.44v6.48h-19.44zM265.71 58.33h38.88v6.48h-38.88zM324.04 58.33h12.96v6.48h-12.96zM343.48 58.33h6.48v6.48h-6.48zM6.48 64.81h38.88v6.48h-38.88zM51.85 64.81h19.44v6.48h-19.44zM77.77 64.81h6.48v6.48h-6.48zM90.73 64.81h19.44v6.48h-19.44zM116.65 64.81h6.48v6.48h-6.48zM136.09 64.81h19.44v6.48h-19.44zM162.02 64.81h6.48v6.48h-6.48zM200.90 64.81h12.96v6.48h-12.96zM220.34 64.81h6.48v6.48h-6.48zM246.27 64.81h6.48v6.48h-6.48zM259.23 64.81h19.44v6.48h-19.44zM291.63 64.81h19.44v6.48h-19.44zM317.55 64.81h6.48v6.48h-6.48zM349.96 64.81h6.48v6.48h-6.48zM0.00 71.29h12.96v6.48h-12.96zM32.40 71.29h6.48v6.48h-6.48zM45.36 71.29h12.96v6.48h-12.96zM84.25 71.29h12.96v6.48h-12.96zM103.69 71.29h6.48v6.48h-6.48zM149.06 71.29h12.96v6.48h-12.96zM181.46 71.29h25.92v6.48h-25.92zM213.86 71.29h12.96v6.48h-12.96zM233.31 71.29h6.48v6.48h-6.48zM246.27 71.29h32.40v6.48h-32.40zM291.63 71.29h6.48v6.48h-6.48zM311.07 71.29h12.96v6.48h-12.96zM356.44 71.29h12.96v6.48h-12.96zM32.40 77.77h12.96v6.48h-12.96zM51.85 77.77h12.96v6.48h-12.96zM90.73 77.77h12.96v6.48h-12.96zM129.61 77.77h12.96v6.48h-12.96zM155.54 77.77h6.48v6.48h-6.48zM181.46 77.77h6.48v6.48h-6.48zM194.42 77.77h12.96v6.48h-12.96zM226.82 77.77h6.48v6.48h-6.48zM239.79 77.77h12.96v6.48h-12.96zM272.19 77.77h12.96v6.48h-12.96zM337.00 77.77h6.48v6.48h-6.48zM349.96 77.77h6.48v6.48h-6.48zM6.48 84.25h32.40v6.48h-32.40zM45.36 84.25h12.96v6.48h-12.96zM64.81 84.25h6.48v6.48h-6.48zM84.25 84.25h6.48v6.48h-6.48zM97.21 84.25h19.44v6.48h-19.44zM129.61 84.25h6.48v6.48h-6.48zM142.58 84.25h12.96v6.48h-12.96zM168.50 84.25h6.48v6.48h-6.48zM181.46 84.25h6.48v6.48h-6.48zM220.34 84.25h19.44v6.48h-19.44zM285.15 84.25h6.48v6.48h-6.48zM324.04 84.25h38.88v6.48h-38.88zM0.00 90.73h6.48v6.48h-6.48zM12.96 90.73h12.96v6.48h-12.96zM38.88 90.73h19.44v6.48h-19.44zM64.81 90.73h38.88v6.48h-38.88zM110.17 90.73h19.44v6.48h-19.44zM136.09 90.73h6.48v6.48h-6.48zM149.06 90.73h6.48v6.48h-6.48zM162.02 90.73h6.48v6.48h-6.48zM174.98 90.73h6.48v6.48h-6.48zM213.86 90.73h6.48v6.48h-6.48zM226.82 90.73h6.48v6.48h-6.48zM265.71 90.73h6.48v6.48h-6.48zM278.67 90.73h19.44v6.48h-19.44zM304.59 90.73h12.96v6.48h-12.96zM343.48 90.73h25.92v6.48h-25.92zM6.48 97.21h6.48v6.48h-6.48zM19.44 97.21h6.48v6.48h-6.48zM32.40 97.21h6.48v6.48h-6.48zM58.33 97.21h19.44v6.48h-19.44zM84.25 97.21h19.44v6.48h-19.44zM110.17 97.21h12.96v6.48h-12.96zM129.61 97.21h25.92v6.48h-25.92zM168.50 97.21h6.48v6.48h-6.48zM187.94 97.21h6.48v6.48h-6.48zM200.90 97.21h6.48v6.48h-6.48zM220.34 97.21h25.92v6.48h-25.92zM272.19 97.21h19.44v6.48h-19.44zM298.11 97.21h6.48v6.48h-6.48zM311.07 97.21h19.44v6.48h-19.44zM337.00 97.21h12.96v6.48h-12.96zM362.92 97.21h6.48v6.48h-6.48zM0.00 103.69h6.48v6.48h-6.48zM25.92 103.69h6.48v6.48h-6.48zM38.88 103.69h6.48v6.48h-6.48zM58.33 103.69h6.48v6.48h-6.48zM77.77 103.69h25.92v6.48h-25.92zM116.65 103.69h25.92v6.48h-25.92zM162.02 103.69h6.48v6.48h-6.48zM187.94 103.69h6.48v6.48h-6.48zM220.34 103.69h6.48v6.48h-6.48zM239.79 103.69h19.44v6.48h-19.44zM265.71 103.69h25.92v6.48h-25.92zM298.11 103.69h12.96v6.48h-12.96zM337.00 103.69h19.44v6.48h-19.44zM6.48 110.17h32.40v6.48h-32.40zM45.36 110.17h6.48v6.48h-6.48zM58.33 110.17h12.96v6.48h-12.96zM77.77 110.17h6.48v6.48h-6.48zM90.73 110.17h6.48v6.48h-6.48zM116.65 110.17h6.48v6.48h-6.48zM136.09 110.17h6.48v6.48h-6.48zM181.46 110.17h6.48v6.48h-6.48zM200.90 110.17h6.48v6.48h-6.48zM220.34 110.17h6.48v6.48h-6.48zM239.79 110.17h12.96v6.48h-12.96zM278.67 110.17h6.48v6.48h-6.48zM291.63 110.17h6.48v6.48h-6.48zM324.04 110.17h6.48v6.48h-6.48zM349.96 110.17h6.48v6.48h-6.48zM362.92 110.17h6.48v6.48h-6.48zM6.48 116.65h6.48v6.48h-6.48zM19.44 116.65h45.36v6.48h-45.36zM71.29 116.65h19.44v6.48h-19.44zM110.17 116.65h12.96v6.48h-12.96zM142.58 116.65h6.48v6.48h-6.48zM174.98 116.65h32.40v6.48h-32.40zM213.86 116.65h6.48v6.48h-6.48zM226.82 116.65h6.48v6.48h-6.48zM239.79 116.65h12.96v6.48h-12.96zM265.71 116.65h12.96v6.48h-12.96zM304.59 116.65h6.48v6.48h-6.48zM349.96 116.65h6.48v6.48h-6.48zM362.92 116.65h6.48v6.48h-6.48zM0.00 123.13h12.96v6.48h-12.96zM51.85 123.13h6.48v6.48h-6.48zM64.81 123.13h6.48v6.48h-6.48zM77.77 123.13h6.48v6.48h-6.48zM90.73 123.13h6.48v6.48h-6.48zM123.13 123.13h32.40v6.48h-32.40zM162.02 123.13h19.44v6.48h-19.44zM200.90 123.13h19.44v6.48h-19.44zM226.82 123.13h12.96v6.48h-12.96zM246.27 123.13h6.48v6.48h-6.48zM259.23 123.13h19.44v6.48h-19.44zM298.11 123.13h19.44v6.48h-19.44zM324.04 123.13h12.96v6.48h-12.96zM356.44 123.13h6.48v6.48h-6.48zM25.92 129.61h6.48v6.48h-6.48zM38.88 129.61h6.48v6.48h-6.48zM51.85 129.61h19.44v6.48h-19.44zM84.25 129.61h12.96v6.48h-12.96zM103.69 129.61h6.48v6.48h-6.48zM116.65 129.61h6.48v6.48h-6.48zM149.06 129.61h25.92v6.48h-25.92zM181.46 129.61h6.48v6.48h-6.48zM200.90 129.61h12.96v6.48h-12.96zM226.82 129.61h6.48v6.48h-6.48zM246.27 129.61h25.92v6.48h-25.92zM278.67 129.61h19.44v6.48h-19.44zM311.07 129.61h19.44v6.48h-19.44zM343.48 129.61h19.44v6.48h-19.44zM12.96 136.09h19.44v6.48h-19.44zM45.36 136.09h19.44v6.48h-19.44zM71.29 136.09h6.48v6.48h-6.48zM84.25 136.09h6.48v6.48h-6.48zM97.21 136.09h6.48v6.48h-6.48zM136.09 136.09h12.96v6.48h-12.96zM162.02 136.09h25.92v6.48h-25.92zM194.42 136.09h6.48v6.48h-6.48zM207.38 136.09h12.96v6.48h-12.96zM226.82 136.09h32.40v6.48h-32.40zM265.71 136.09h19.44v6.48h-19.44zM291.63 136.09h19.44v6.48h-19.44zM324.04 136.09h12.96v6.48h-12.96zM343.48 136.09h6.48v6.48h-6.48zM356.44 136.09h12.96v6.48h-12.96zM6.48 142.58h38.88v6.48h-38.88zM51.85 142.58h6.48v6.48h-6.48zM71.29 142.58h6.48v6.48h-6.48zM90.73 142.58h25.92v6.48h-25.92zM136.09 142.58h12.96v6.48h-12.96zM162.02 142.58h19.44v6.48h-19.44zM187.94 142.58h45.36v6.48h-45.36zM246.27 142.58h6.48v6.48h-6.48zM259.23 142.58h32.40v6.48h-32.40zM311.07 142.58h25.92v6.48h-25.92zM356.44 142.58h6.48v6.48h-6.48zM6.48 149.06h6.48v6.48h-6.48zM19.44 149.06h19.44v6.48h-19.44zM45.36 149.06h12.96v6.48h-12.96zM97.21 149.06h12.96v6.48h-12.96zM116.65 149.06h19.44v6.48h-19.44zM142.58 149.06h12.96v6.48h-12.96zM168.50 149.06h19.44v6.48h-19.44zM194.42 149.06h6.48v6.48h-6.48zM207.38 149.06h12.96v6.48h-12.96zM226.82 149.06h6.48v6.48h-6.48zM259.23 149.06h19.44v6.48h-19.44zM298.11 149.06h12.96v6.48h-12.96zM317.55 149.06h6.48v6.48h-6.48zM330.52 149.06h6.48v6.48h-6.48zM343.48 149.06h6.48v6.48h-6.48zM356.44 149.06h6.48v6.48h-6.48zM0.00 155.54h6.48v6.48h-6.48zM19.44 155.54h6.48v6.48h-6.48zM32.40 155.54h12.96v6.48h-12.96zM51.85 155.54h6.48v6.48h-6.48zM64.81 155.54h19.44v6.48h-19.44zM90.73 155.54h32.40v6.48h-32.40zM129.61 155.54h6.48v6.48h-6.48zM142.58 155.54h19.44v6.48h-19.44zM174.98 155.54h6.48v6.48h-6.48zM187.94 155.54h12.96v6.48h-12.96zM207.38 155.54h12.96v6.48h-12.96zM226.82 155.54h6.48v6.48h-6.48zM239.79 155.54h12.96v6.48h-12.96zM265.71 155.54h32.40v6.48h-32.40zM337.00 155.54h32.40v6.48h-32.40zM25.92 162.02h12.96v6.48h-12.96zM71.29 162.02h6.48v6.48h-6.48zM136.09 162.02h6.48v6.48h-6.48zM149.06 162.02h6.48v6.48h-6.48zM168.50 162.02h6.48v6.48h-6.48zM181.46 162.02h25.92v6.48h-25.92zM213.86 162.02h6.48v6.48h-6.48zM226.82 162.02h12.96v6.48h-12.96zM246.27 162.02h12.96v6.48h-12.96zM272.19 162.02h19.44v6.48h-19.44zM298.11 162.02h6.48v6.48h-6.48zM311.07 162.02h6.48v6.48h-6.48zM330.52 162.02h6.48v6.48h-6.48zM349.96 162.02h12.96v6.48h-12.96zM0.00 168.50h6.48v6.48h-6.48zM12.96 168.50h6.48v6.48h-6.48zM25.92 168.50h38.88v6.48h-38.88zM71.29 168.50h19.44v6.48h-19.44zM103.69 168.50h6.48v6.48h-6.48zM142.58 168.50h12.96v6.48h-12.96zM174.98 168.50h12.96v6.48h-12.96zM200.90 168.50h6.48v6.48h-6.48zM213.86 168.50h19.44v6.48h-19.44zM239.79 168.50h19.44v6.48h-19.44zM265.71 168.50h19.44v6.48h-19.44zM291.63 168.50h77.77v6.48h-77.77zM0.00 174.98h6.48v6.48h-6.48zM25.92 174.98h6.48v6.48h-6.48zM51.85 174.98h12.96v6.48h-12.96zM90.73 174.98h6.48v6.48h-6.48zM103.69 174.98h12.96v6.48h-12.96zM129.61 174.98h6.48v6.48h-6.48zM162.02 174.98h12.96v6.48h-12.96zM181.46 174.98h12.96v6.48h-12.96zM207.38 174.98h6.48v6.48h-6.48zM226.82 174.98h6.48v6.48h-6.48zM252.75 174.98h19.44v6.48h-19.44zM278.67 174.98h12.96v6.48h-12.96zM304.59 174.98h12.96v6.48h-12.96zM337.00 174.98h25.92v6.48h-25.92zM0.00 181.46h6.48v6.48h-6.48zM12.96 181.46h19.44v6.48h-19.44zM38.88 181.46h6.48v6.48h-6.48zM51.85 181.46h6.48v6.48h-6.48zM64.81 181.46h32.40v6.48h-32.40zM110.17 181.46h12.96v6.48h-12.96zM129.61 181.46h12.96v6.48h-12.96zM155.54 181.46h6.48v6.48h-6.48zM187.94 181.46h6.48v6.48h-6.48zM213.86 181.46h6.48v6.48h-6.48zM226.82 181.46h6.48v6.48h-6.48zM259.23 181.46h6.48v6.48h-6.48zM272.19 181.46h12.96v6.48h-12.96zM291.63 181.46h25.92v6.48h-25.92zM324.04 181.46h6.48v6.48h-6.48zM337.00 181.46h19.44v6.48h-19.44zM362.92 181.46h6.48v6.48h-6.48zM0.00 187.94h6.48v6.48h-6.48zM25.92 187.94h6.48v6.48h-6.48zM51.85 187.94h6.48v6.48h-6.48zM84.25 187.94h12.96v6.48h-12.96zM116.65 187.94h6.48v6.48h-6.48zM129.61 187.94h12.96v6.48h-12.96zM149.06 187.94h6.48v6.48h-6.48zM162.02 187.94h6.48v6.48h-6.48zM187.94 187.94h6.48v6.48h-6.48zM207.38 187.94h12.96v6.48h-12.96zM226.82 187.94h6.48v6.48h-6.48zM239.79 187.94h12.96v6.48h-12.96zM259.23 187.94h19.44v6.48h-19.44zM291.63 187.94h12.96v6.48h-12.96zM311.07 187.94h6.48v6.48h-6.48zM337.00 187.94h6.48v6.48h-6.48zM349.96 187.94h6.48v6.48h-6.48zM6.48 194.42h51.85v6.48h-51.85zM64.81 194.42h6.48v6.48h-6.48zM97.21 194.42h6.48v6.48h-6.48zM116.65 194.42h12.96v6.48h-12.96zM149.06 194.42h6.48v6.48h-6.48zM174.98 194.42h6.48v6.48h-6.48zM187.94 194.42h6.48v6.48h-6.48zM226.82 194.42h6.48v6.48h-6.48zM239.79 194.42h6.48v6.48h-6.48zM265.71 194.42h25.92v6.48h-25.92zM298.11 194.42h6.48v6.48h-6.48zM311.07 194.42h45.36v6.48h-45.36zM0.00 200.90h6.48v6.48h-6.48zM19.44 200.90h12.96v6.48h-12.96zM51.85 200.90h6.48v6.48h-6.48zM64.81 200.90h12.96v6.48h-12.96zM97.21 200.90h6.48v6.48h-6.48zM123.13 200.90h12.96v6.48h-12.96zM142.58 200.90h6.48v6.48h-6.48zM162.02 200.90h19.44v6.48h-19.44zM194.42 200.90h6.48v6.48h-6.48zM207.38 200.90h12.96v6.48h-12.96zM239.79 200.90h6.48v6.48h-6.48zM252.75 200.90h19.44v6.48h-19.44zM278.67 200.90h6.48v6.48h-6.48zM291.63 200.90h12.96v6.48h-12.96zM330.52 200.90h6.48v6.48h-6.48zM356.44 200.90h6.48v6.48h-6.48zM0.00 207.38h6.48v6.48h-6.48zM12.96 207.38h12.96v6.48h-12.96zM38.88 207.38h19.44v6.48h-19.44zM64.81 207.38h6.48v6.48h-6.48zM77.77 207.38h12.96v6.48h-12.96zM97.21 207.38h6.48v6.48h-6.48zM110.17 207.38h6.48v6.48h-6.48zM123.13 207.38h6.48v6.48h-6.48zM136.09 207.38h19.44v6.48h-19.44zM162.02 207.38h38.88v6.48h-38.88zM213.86 207.38h6.48v6.48h-6.48zM246.27 207.38h12.96v6.48h-12.96zM265.71 207.38h6.48v6.48h-6.48zM278.67 207.38h6.48v6.48h-6.48zM291.63 207.38h25.92v6.48h-25.92zM330.52 207.38h6.48v6.48h-6.48zM343.48 207.38h6.48v6.48h-6.48zM362.92 207.38h6.48v6.48h-6.48zM0.00 213.86h6.48v6.48h-6.48zM19.44 213.86h6.48v6.48h-6.48zM32.40 213.86h6.48v6.48h-6.48zM45.36 213.86h6.48v6.48h-6.48zM71.29 213.86h6.48v6.48h-6.48zM84.25 213.86h6.48v6.48h-6.48zM97.21 213.86h12.96v6.48h-12.96zM123.13 213.86h32.40v6.48h-32.40zM162.02 213.86h32.40v6.48h-32.40zM200.90 213.86h6.48v6.48h-6.48zM226.82 213.86h12.96v6.48h-12.96zM265.71 213.86h12.96v6.48h-12.96zM285.15 213.86h19.44v6.48h-19.44zM311.07 213.86h12.96v6.48h-12.96zM330.52 213.86h12.96v6.48h-12.96zM349.96 213.86h6.48v6.48h-6.48zM362.92 213.86h6.48v6.48h-6.48zM6.48 220.34h6.48v6.48h-6.48zM25.92 220.34h19.44v6.48h-19.44zM51.85 220.34h12.96v6.48h-12.96zM71.29 220.34h6.48v6.48h-6.48zM84.25 220.34h6.48v6.48h-6.48zM97.21 220.34h6.48v6.48h-6.48zM110.17 220.34h12.96v6.48h-12.96zM129.61 220.34h6.48v6.48h-6.48zM142.58 220.34h19.44v6.48h-19.44zM168.50 220.34h38.88v6.48h-38.88zM220.34 220.34h12.96v6.48h-12.96zM239.79 220.34h6.48v6.48h-6.48zM252.75 220.34h6.48v6.48h-6.48zM265.71 220.34h19.44v6.48h-19.44zM298.11 220.34h12.96v6.48h-12.96zM317.55 220.34h25.92v6.48h-25.92zM349.96 220.34h6.48v6.48h-6.48zM0.00 226.82h6.48v6.48h-6.48zM32.40 226.82h6.48v6.48h-6.48zM51.85 226.82h12.96v6.48h-12.96zM77.77 226.82h6.48v6.48h-6.48zM103.69 226.82h6.48v6.48h-6.48zM123.13 226.82h6.48v6.48h-6.48zM155.54 226.82h6.48v6.48h-6.48zM187.94 226.82h12.96v6.48h-12.96zM213.86 226.82h25.92v6.48h-25.92zM246.27 226.82h6.48v6.48h-6.48zM285.15 226.82h12.96v6.48h-12.96zM317.55 226.82h12.96v6.48h-12.96zM337.00 226.82h32.40v6.48h-32.40zM0.00 233.31h6.48v6.48h-6.48zM25.92 233.31h25.92v6.48h-25.92zM58.33 233.31h6.48v6.48h-6.48zM71.29 233.31h6.48v6.48h-6.48zM84.25 233.31h6.48v6.48h-6.48zM110.17 233.31h6.48v6.48h-6.48zM129.61 233.31h6.48v6.48h-6.48zM168.50 233.31h12.96v6.48h-12.96zM194.42 233.31h25.92v6.48h-25.92zM226.82 233.31h6.48v6.48h-6.48zM259.23 233.31h6.48v6.48h-6.48zM272.19 233.31h6.48v6.48h-6.48zM285.15 233.31h6.48v6.48h-6.48zM304.59 233.31h19.44v6.48h-19.44zM343.48 233.31h12.96v6.48h-12.96zM362.92 233.31h6.48v6.48h-6.48zM12.96 239.79h6.48v6.48h-6.48zM25.92 239.79h6.48v6.48h-6.48zM71.29 239.79h25.92v6.48h-25.92zM103.69 239.79h6.48v6.48h-6.48zM116.65 239.79h25.92v6.48h-25.92zM155.54 239.79h6.48v6.48h-6.48zM168.50 239.79h6.48v6.48h-6.48zM207.38 239.79h6.48v6.48h-6.48zM220.34 239.79h12.96v6.48h-12.96zM252.75 239.79h12.96v6.48h-12.96zM304.59 239.79h12.96v6.48h-12.96zM324.04 239.79h6.48v6.48h-6.48zM343.48 239.79h6.48v6.48h-6.48zM362.92 239.79h6.48v6.48h-6.48zM0.00 246.27h12.96v6.48h-12.96zM25.92 246.27h6.48v6.48h-6.48zM38.88 246.27h19.44v6.48h-19.44zM64.81 246.27h12.96v6.48h-12.96zM84.25 246.27h6.48v6.48h-6.48zM97.21 246.27h6.48v6.48h-6.48zM123.13 246.27h12.96v6.48h-12.96zM149.06 246.27h12.96v6.48h-12.96zM168.50 246.27h6.48v6.48h-6.48zM181.46 246.27h45.36v6.48h-45.36zM233.31 246.27h12.96v6.48h-12.96zM278.67 246.27h6.48v6.48h-6.48zM291.63 246.27h6.48v6.48h-6.48zM317.55 246.27h6.48v6.48h-6.48zM330.52 246.27h12.96v6.48h-12.96zM349.96 246.27h19.44v6.48h-19.44zM0.00 252.75h6.48v6.48h-6.48zM19.44 252.75h6.48v6.48h-6.48zM32.40 252.75h6.48v6.48h-6.48zM45.36 252.75h6.48v6.48h-6.48zM71.29 252.75h12.96v6.48h-12.96zM103.69 252.75h6.48v6.48h-6.48zM116.65 252.75h19.44v6.48h-19.44zM149.06 252.75h12.96v6.48h-12.96zM168.50 252.75h25.92v6.48h-25.92zM220.34 252.75h6.48v6.48h-6.48zM246.27 252.75h6.48v6.48h-6.48zM272.19 252.75h6.48v6.48h-6.48zM285.15 252.75h6.48v6.48h-6.48zM311.07 252.75h6.48v6.48h-6.48zM349.96 252.75h19.44v6.48h-19.44zM0.00 259.23h12.96v6.48h-12.96zM25.92 259.23h38.88v6.48h-38.88zM71.29 259.23h6.48v6.48h-6.48zM90.73 259.23h6.48v6.48h-6.48zM103.69 259.23h6.48v6.48h-6.48zM123.13 259.23h6.48v6.48h-6.48zM142.58 259.23h32.40v6.48h-32.40zM194.42 259.23h38.88v6.48h-38.88zM239.79 259.23h6.48v6.48h-6.48zM252.75 259.23h12.96v6.48h-12.96zM291.63 259.23h6.48v6.48h-6.48zM304.59 259.23h6.48v6.48h-6.48zM317.55 259.23h12.96v6.48h-12.96zM337.00 259.23h12.96v6.48h-12.96zM356.44 259.23h12.96v6.48h-12.96zM25.92 265.71h6.48v6.48h-6.48zM51.85 265.71h6.48v6.48h-6.48zM71.29 265.71h6.48v6.48h-6.48zM103.69 265.71h12.96v6.48h-12.96zM129.61 265.71h6.48v6.48h-6.48zM142.58 265.71h6.48v6.48h-6.48zM162.02 265.71h45.36v6.48h-45.36zM213.86 265.71h25.92v6.48h-25.92zM252.75 265.71h12.96v6.48h-12.96zM291.63 265.71h6.48v6.48h-6.48zM304.59 265.71h6.48v6.48h-6.48zM317.55 265.71h6.48v6.48h-6.48zM337.00 265.71h6.48v6.48h-6.48zM362.92 265.71h6.48v6.48h-6.48zM6.48 272.19h12.96v6.48h-12.96zM32.40 272.19h25.92v6.48h-25.92zM71.29 272.19h6.48v6.48h-6.48zM90.73 272.19h6.48v6.48h-6.48zM103.69 272.19h12.96v6.48h-12.96zM123.13 272.19h6.48v6.48h-6.48zM136.09 272.19h6.48v6.48h-6.48zM181.46 272.19h32.40v6.48h-32.40zM220.34 272.19h12.96v6.48h-12.96zM239.79 272.19h19.44v6.48h-19.44zM272.19 272.19h6.48v6.48h-6.48zM285.15 272.19h19.44v6.48h-19.44zM317.55 272.19h6.48v6.48h-6.48zM330.52 272.19h12.96v6.48h-12.96zM356.44 272.19h6.48v6.48h-6.48zM0.00 278.67h19.44v6.48h-19.44zM45.36 278.67h12.96v6.48h-12.96zM71.29 278.67h6.48v6.48h-6.48zM90.73 278.67h6.48v6.48h-6.48zM110.17 278.67h6.48v6.48h-6.48zM123.13 278.67h6.48v6.48h-6.48zM155.54 278.67h6.48v6.48h-6.48zM168.50 278.67h6.48v6.48h-6.48zM181.46 278.67h6.48v6.48h-6.48zM200.90 278.67h6.48v6.48h-6.48zM226.82 278.67h12.96v6.48h-12.96zM259.23 278.67h6.48v6.48h-6.48zM278.67 278.67h6.48v6.48h-6.48zM298.11 278.67h6.48v6.48h-6.48zM324.04 278.67h12.96v6.48h-12.96zM362.92 278.67h6.48v6.48h-6.48zM25.92 285.15h6.48v6.48h-6.48zM38.88 285.15h6.48v6.48h-6.48zM58.33 285.15h6.48v6.48h-6.48zM71.29 285.15h19.44v6.48h-19.44zM103.69 285.15h12.96v6.48h-12.96zM129.61 285.15h6.48v6.48h-6.48zM149.06 285.15h25.92v6.48h-25.92zM200.90 285.15h12.96v6.48h-12.96zM233.31 285.15h6.48v6.48h-6.48zM246.27 285.15h12.96v6.48h-12.96zM265.71 285.15h6.48v6.48h-6.48zM278.67 285.15h12.96v6.48h-12.96zM311.07 285.15h6.48v6.48h-6.48zM324.04 285.15h19.44v6.48h-19.44zM349.96 285.15h6.48v6.48h-6.48zM6.48 291.63h12.96v6.48h-12.96zM45.36 291.63h6.48v6.48h-6.48zM64.81 291.63h6.48v6.48h-6.48zM84.25 291.63h6.48v6.48h-6.48zM110.17 291.63h6.48v6.48h-6.48zM136.09 291.63h6.48v6.48h-6.48zM155.54 291.63h6.48v6.48h-6.48zM168.50 291.63h25.92v6.48h-25.92zM207.38 291.63h6.48v6.48h-6.48zM220.34 291.63h12.96v6.48h-12.96zM246.27 291.63h19.44v6.48h-19.44zM298.11 291.63h19.44v6.48h-19.44zM324.04 291.63h6.48v6.48h-6.48zM337.00 291.63h12.96v6.48h-12.96zM356.44 291.63h12.96v6.48h-12.96zM12.96 298.11h32.40v6.48h-32.40zM58.33 298.11h6.48v6.48h-6.48zM84.25 298.11h19.44v6.48h-19.44zM123.13 298.11h6.48v6.48h-6.48zM136.09 298.11h19.44v6.48h-19.44zM162.02 298.11h6.48v6.48h-6.48zM187.94 298.11h32.40v6.48h-32.40zM226.82 298.11h19.44v6.48h-19.44zM259.23 298.11h25.92v6.48h-25.92zM291.63 298.11h6.48v6.48h-6.48zM343.48 298.11h19.44v6.48h-19.44zM12.96 304.59h6.48v6.48h-6.48zM25.92 304.59h12.96v6.48h-12.96zM64.81 304.59h12.96v6.48h-12.96zM84.25 304.59h12.96v6.48h-12.96zM110.17 304.59h32.40v6.48h-32.40zM168.50 304.59h6.48v6.48h-6.48zM200.90 304.59h19.44v6.48h-19.44zM226.82 304.59h19.44v6.48h-19.44zM252.75 304.59h6.48v6.48h-6.48zM265.71 304.59h25.92v6.48h-25.92zM304.59 304.59h6.48v6.48h-6.48zM317.55 304.59h6.48v6.48h-6.48zM337.00 304.59h6.48v6.48h-6.48zM356.44 304.59h12.96v6.48h-12.96zM19.44 311.07h12.96v6.48h-12.96zM38.88 311.07h6.48v6.48h-6.48zM71.29 311.07h25.92v6.48h-25.92zM103.69 311.07h32.40v6.48h-32.40zM142.58 311.07h6.48v6.48h-6.48zM168.50 311.07h32.40v6.48h-32.40zM213.86 311.07h12.96v6.48h-12.96zM233.31 311.07h25.92v6.48h-25.92zM285.15 311.07h19.44v6.48h-19.44zM311.07 311.07h38.88v6.48h-38.88zM58.33 317.55h38.88v6.48h-38.88zM116.65 317.55h6.48v6.48h-6.48zM136.09 317.55h6.48v6.48h-6.48zM149.06 317.55h12.96v6.48h-12.96zM168.50 317.55h6.48v6.48h-6.48zM194.42 317.55h6.48v6.48h-6.48zM213.86 317.55h25.92v6.48h-25.92zM278.67 317.55h12.96v6.48h-12.96zM311.07 317.55h6.48v6.48h-6.48zM337.00 317.55h6.48v6.48h-6.48zM0.00 324.04h45.36v6.48h-45.36zM51.85 324.04h6.48v6.48h-6.48zM64.81 324.04h6.48v6.48h-6.48zM84.25 324.04h6.48v6.48h-6.48zM103.69 324.04h6.48v6.48h-6.48zM116.65 324.04h25.92v6.48h-25.92zM155.54 324.04h19.44v6.48h-19.44zM181.46 324.04h6.48v6.48h-6.48zM194.42 324.04h32.40v6.48h-32.40zM233.31 324.04h19.44v6.48h-19.44zM259.23 324.04h12.96v6.48h-12.96zM311.07 324.04h6.48v6.48h-6.48zM324.04 324.04h6.48v6.48h-6.48zM337.00 324.04h6.48v6.48h-6.48zM362.92 324.04h6.48v6.48h-6.48zM0.00 330.52h6.48v6.48h-6.48zM38.88 330.52h6.48v6.48h-6.48zM58.33 330.52h25.92v6.48h-25.92zM136.09 330.52h6.48v6.48h-6.48zM149.06 330.52h25.92v6.48h-25.92zM194.42 330.52h12.96v6.48h-12.96zM226.82 330.52h6.48v6.48h-6.48zM239.79 330.52h19.44v6.48h-19.44zM278.67 330.52h38.88v6.48h-38.88zM337.00 330.52h6.48v6.48h-6.48zM349.96 330.52h6.48v6.48h-6.48zM362.92 330.52h6.48v6.48h-6.48zM0.00 337.00h6.48v6.48h-6.48zM12.96 337.00h19.44v6.48h-19.44zM38.88 337.00h6.48v6.48h-6.48zM64.81 337.00h6.48v6.48h-6.48zM77.77 337.00h12.96v6.48h-12.96zM97.21 337.00h19.44v6.48h-19.44zM136.09 337.00h12.96v6.48h-12.96zM155.54 337.00h45.36v6.48h-45.36zM233.31 337.00h12.96v6.48h-12.96zM259.23 337.00h6.48v6.48h-6.48zM272.19 337.00h25.92v6.48h-25.92zM304.59 337.00h45.36v6.48h-45.36zM356.44 337.00h6.48v6.48h-6.48zM0.00 343.48h6.48v6.48h-6.48zM12.96 343.48h19.44v6.48h-19.44zM38.88 343.48h6.48v6.48h-6.48zM58.33 343.48h12.96v6.48h-12.96zM77.77 343.48h6.48v6.48h-6.48zM116.65 343.48h6.48v6.48h-6.48zM136.09 343.48h12.96v6.48h-12.96zM174.98 343.48h32.40v6.48h-32.40zM220.34 343.48h12.96v6.48h-12.96zM246.27 343.48h32.40v6.48h-32.40zM298.11 343.48h12.96v6.48h-12.96zM324.04 343.48h19.44v6.48h-19.44zM0.00 349.96h6.48v6.48h-6.48zM12.96 349.96h19.44v6.48h-19.44zM38.88 349.96h6.48v6.48h-6.48zM77.77 349.96h12.96v6.48h-12.96zM103.69 349.96h12.96v6.48h-12.96zM123.13 349.96h12.96v6.48h-12.96zM142.58 349.96h25.92v6.48h-25.92zM174.98 349.96h12.96v6.48h-12.96zM194.42 349.96h6.48v6.48h-6.48zM207.38 349.96h12.96v6.48h-12.96zM226.82 349.96h6.48v6.48h-6.48zM239.79 349.96h6.48v6.48h-6.48zM252.75 349.96h6.48v6.48h-6.48zM272.19 349.96h6.48v6.48h-6.48zM285.15 349.96h6.48v6.48h-6.48zM311.07 349.96h12.96v6.48h-12.96zM330.52 349.96h6.48v6.48h-6.48zM349.96 349.96h6.48v6.48h-6.48zM0.00 356.44h6.48v6.48h-6.48zM38.88 356.44h6.48v6.48h-6.48zM51.85 356.44h6.48v6.48h-6.48zM84.25 356.44h6.48v6.48h-6.48zM97.21 356.44h12.96v6.48h-12.96zM116.65 356.44h12.96v6.48h-12.96zM142.58 356.44h6.48v6.48h-6.48zM155.54 356.44h6.48v6.48h-6.48zM168.50 356.44h6.48v6.48h-6.48zM181.46 356.44h12.96v6.48h-12.96zM200.90 356.44h19.44v6.48h-19.44zM233.31 356.44h6.48v6.48h-6.48zM246.27 356.44h6.48v6.48h-6.48zM265.71 356.44h12.96v6.48h-12.96zM285.15 356.44h12.96v6.48h-12.96zM304.59 356.44h12.96v6.48h-12.96zM324.04 356.44h19.44v6.48h-19.44zM349.96 356.44h19.44v6.48h-19.44zM0.00 362.92h45.36v6.48h-45.36zM64.81 362.92h12.96v6.48h-12.96zM97.21 362.92h25.92v6.48h-25.92zM136.09 362.92h6.48v6.48h-6.48zM149.06 362.92h12.96v6.48h-12.96zM174.98 362.92h6.48v6.48h-6.48zM187.94 362.92h12.96v6.48h-12.96zM226.82 362.92h12.96v6.48h-12.96zM246.27 362.92h6.48v6.48h-6.48zM272.19 362.92h6.48v6.48h-6.48zM291.63 362.92h51.85v6.48h-51.85z" fill="#000"/><rect x="156.8" y="156.8" width="55.9" height="55.9" fill="#fff"/><rect x="159.8" y="159.8" width="49.9" height="49.9" fill="#000"/><rect x="179.7" y="169.7" width="10.0" height="29.9" fill="#fff"/><rect x="169.7" y="179.7" width="29.9" height="10.0" fill="#fff"/></svg>
<div class="t" style="left:2915.7px;top:1929.2px;font-size:15px;line-height:15px;color:#2b2b2b;transform:scaleX(1.1033);">Monnaie</div>
<div class="t" style="left:3088.0px;top:1929.2px;font-size:15px;line-height:15px;color:#2b2b2b;transform:scaleX(1.1385);">Montant</div>
<div class="t" style="left:2916.2px;top:1949.0px;font-size:15px;line-height:15px;color:#2b2b2b;transform:scaleX(1.0076);">CHF</div>
<div class="t" style="left:3088.0px;top:1949.0px;font-size:15px;line-height:15px;color:#2b2b2b;transform:scaleX(1.2520);">1'292.60</div>
<div class="t" style="left:3306.1px;top:1535.8px;font-size:21px;line-height:21px;color:#2b2b2b;transform:scaleX(1.0789);">Compte / Payable à</div>
<div class="t" style="left:3306.6px;top:1562.1px;font-size:15px;line-height:15px;color:#2b2b2b;font-weight:700;transform:scaleX(1.0494);">Compte / Payable à</div>
<div class="t" style="left:3306.3px;top:1581.7px;font-size:15px;line-height:15px;color:#2b2b2b;transform:scaleX(1.2169);">CH 34 3000 0001 1000 0031 7</div>
<div class="t" style="left:3307.1px;top:1601.3px;font-size:15px;line-height:15px;color:#2b2b2b;transform:scaleX(1.0828);">Vaudoise Generale</div>
<div class="t" style="left:3306.4px;top:1620.9px;font-size:15px;line-height:15px;color:#2b2b2b;transform:scaleX(1.1036);">Case Postale 120</div>
<div class="t" style="left:3305.9px;top:1640.5px;font-size:15px;line-height:15px;color:#2b2b2b;transform:scaleX(1.1464);">1001 Lausanne</div>
<div class="t" style="left:3306.2px;top:1679.5px;font-size:15px;line-height:15px;color:#2b2b2b;font-weight:700;transform:scaleX(1.0095);">Référence</div>
<div class="t" style="left:3306.6px;top:1698.0px;font-size:12px;line-height:12px;color:#2b2b2b;transform:scaleX(1.1661);">00 00002 23424 36292 04000 44491</div>
<div class="t" style="left:3306.2px;top:1732.2px;font-size:15px;line-height:15px;color:#2b2b2b;font-weight:700;transform:scaleX(1.0310);">Payable par</div>
<div class="t" style="left:3305.9px;top:1751.8px;font-size:15px;line-height:15px;color:#2b2b2b;transform:scaleX(1.0777);">Paul Gosselin</div>
<div class="t" style="left:3307.1px;top:1771.4px;font-size:15px;line-height:15px;color:#2b2b2b;transform:scaleX(1.0861);">Avenue des Bouveresses 24</div>
<div class="t" style="left:3305.9px;top:1790.9px;font-size:15px;line-height:15px;color:#2b2b2b;transform:scaleX(1.1464);">1010 Lausanne</div>
<div style="left:3958.6px;top:52.0px;width:572.9px;height:2362.5px;background:#f0f0f0;"></div>
<div class="t" style="left:3985.1px;top:98.8px;font-size:45px;line-height:45px;color:#ef7d22;transform:scaleX(1.0411);">Transactions</div>
<svg style="left:4368px;top:114px" width="28" height="26" viewBox="0 0 28 26">
<path d="M15 3 L24 12 L21 13 L17 18 L17.5 21.5 L15.5 23 L4.5 12 L6 10 L9.5 10.5 L14.5 6.5 Z" fill="#7a7a7a"/>
<path d="M9 17 L2.5 24" stroke="#7a7a7a" stroke-width="2.6"/>
</svg>
<div class="t" style="left:4448.9px;top:113.5px;font-size:30px;line-height:30px;color:#8e8e8e;transform:scaleX(0.9331);">Aa aA</div>
<div style="left:3958.6px;top:258.0px;width:572.4px;height:2.0px;background:#767676;"></div>
<div style="left:3958.6px;top:326.0px;width:572.4px;height:2.0px;background:#767676;"></div>
<div style="left:3958.6px;top:393.0px;width:572.4px;height:2.0px;background:#767676;"></div>
<div style="left:3958.6px;top:461.0px;width:572.4px;height:2.0px;background:#767676;"></div>
<div style="left:3958.6px;top:528.0px;width:572.4px;height:2.0px;background:#767676;"></div>
<div style="left:3958.6px;top:595.0px;width:572.4px;height:2.0px;background:#767676;"></div>
<div style="left:3958.6px;top:662.0px;width:572.4px;height:2.0px;background:#767676;"></div>
<div style="left:3958.6px;top:730.0px;width:572.4px;height:2.0px;background:#767676;"></div>
<div style="left:3994.0px;top:283.0px;width:9.5px;height:10.0px;background:#f07d2a;"></div>
<div class="t" style="left:4038.4px;top:275.4px;font-size:30px;line-height:30px;color:#f08a4c;transform:scaleX(0.9814);">Transactions</div>
<div style="left:3994.0px;top:350.3px;width:9.5px;height:10.0px;background:#f07d2a;"></div>
<div class="t" style="left:4038.4px;top:342.8px;font-size:30px;line-height:30px;color:#4f4f4f;transform:scaleX(1.0171);">To pay</div>
<div style="left:3994.0px;top:417.6px;width:9.5px;height:10.0px;background:#f07d2a;"></div>
<div class="t" style="left:4038.4px;top:410.1px;font-size:30px;line-height:30px;color:#4f4f4f;transform:scaleX(1.0124);">To reconcile [G]</div>
<div style="left:3994.0px;top:484.9px;width:9.5px;height:10.0px;background:#f07d2a;"></div>
<div class="t" style="left:4036.6px;top:477.3px;font-size:30px;line-height:30px;color:#4f4f4f;transform:scaleX(0.9899);">Reconciled [G]</div>
<div style="left:3994.0px;top:552.2px;width:9.5px;height:10.0px;background:#f07d2a;"></div>
<div class="t" style="left:4036.5px;top:544.7px;font-size:30px;line-height:30px;color:#4f4f4f;transform:scaleX(1.0246);">Documents</div>
<div style="left:3994.0px;top:619.5px;width:9.5px;height:10.0px;background:#f07d2a;"></div>
<div class="t" style="left:4037.7px;top:612.0px;font-size:30px;line-height:30px;color:#4f4f4f;transform:scaleX(0.9876);">Overview [G]</div>
<div style="left:3994.0px;top:686.8px;width:9.5px;height:10.0px;background:#f07d2a;"></div>
<div class="t" style="left:4036.4px;top:679.2px;font-size:30px;line-height:30px;color:#4f4f4f;transform:scaleX(1.0674);">Notepad</div>
<svg style="left:4412px;top:2323px" width="86" height="86" viewBox="0 0 86 86">
<circle cx="42.7" cy="43" r="34.5" fill="none" stroke="#f9a556" stroke-width="4.3"/>
<path d="M21 43 L36 29 L36 38 L57 38 L57 48 L36 48 L36 57 Z" fill="#f9a556"/>
</svg>
<svg style="left:3540px;top:2210px" width="86" height="86" viewBox="0 0 86 86">
<circle cx="41.2" cy="41.5" r="33.8" fill="none" stroke="#f9a556" stroke-width="4.3"/>
<g transform="translate(42.5 41.5) rotate(45)" fill="none" stroke="#f9a556" stroke-width="1.9">
<path d="M2.2 -9 V13 A2.6 2.6 0 0 1 -3 13 V-18 A4.6 4.6 0 0 1 6.2 -18 V19 A6.2 6.2 0 0 1 -6.2 19 V-8"/>
</g>
</svg>
<svg style="left:3654px;top:2210px" width="86" height="86" viewBox="0 0 86 86">
<circle cx="40.9" cy="41.5" r="33.8" fill="none" stroke="#f9a556" stroke-width="4.3"/>
<circle cx="40.5" cy="42.7" r="15" fill="none" stroke="#f9a556" stroke-width="2.4"/>
<g fill="#f9a556" opacity="0.75"><circle cx="35" cy="37" r="1.3"/><circle cx="40.5" cy="35" r="1"/><circle cx="40.5" cy="41" r="1"/><circle cx="36" cy="43" r="1"/><circle cx="46" cy="45" r="1.6"/><circle cx="45" cy="49" r="1.3"/><circle cx="40.5" cy="50" r="1"/><circle cx="47.5" cy="40" r="1"/><circle cx="33" cy="42" r="0.9"/></g>
</svg>
<svg style="left:3766px;top:2210px" width="86" height="86" viewBox="0 0 86 86">
<circle cx="41.5" cy="41.5" r="33.8" fill="none" stroke="#f9a556" stroke-width="4.3"/>
<path d="M26.7 28.9 C34 29.5 39.5 32.5 42 36.8 C36 43 30.5 50 27.6 57.2" fill="none" stroke="#f9a556" stroke-width="5" stroke-linecap="round"/>
<path d="M41 37.5 L57.4 24.7" fill="none" stroke="#f9a556" stroke-width="2.2" stroke-linecap="round"/>
<path d="M42 37 C48 44 54 52 57.4 59" fill="none" stroke="#f9a556" stroke-width="2" stroke-linecap="round"/>
</svg>
<svg style="left:2310px;top:2210px" width="80" height="80" viewBox="0 0 80 80">
<circle cx="39.7" cy="39.7" r="33.8" fill="none" stroke="#f9a556" stroke-width="4.3"/>
<rect x="21.7" y="23.1" width="3.6" height="35" fill="#f9a556"/><rect x="54" y="23.1" width="3.7" height="35" fill="#f9a556"/>
<rect x="27.8" y="21.7" width="23.7" height="11.5" fill="#f9a556"/><rect x="43.6" y="22.8" width="4.4" height="9.5" fill="#fff"/>
<rect x="25" y="33.9" width="29" height="2.9" fill="#f9a556" opacity="0.55"/>
<rect x="27.8" y="41.7" width="24" height="1.9" fill="#f9a556"/><rect x="27.8" y="46.3" width="24" height="1.9" fill="#f9a556" opacity="0.7"/><rect x="27.8" y="50.7" width="24" height="1.9" fill="#f9a556"/>
<rect x="25.3" y="56.6" width="32.4" height="1.9" fill="#f9a556" opacity="0.6"/>
</svg>
<div style="left:1769.6px;top:2251.8px;width:563px;height:105px;background:#fff;border:1px solid #c8c8c8;box-shadow:4px 5px 6px rgba(0,0,0,0.22)"></div>
<div style="left:1773px;top:2307.2px;width:556px;height:46.3px;background:#fadfe2;border:1px solid #f4a3a8"></div>
<div class="t" style="left:1843.5px;top:2267.1px;font-size:27px;line-height:27px;color:#b8b8b8;transform:scaleX(0.9862);">Post transaction and complete details</div>
<div class="t" style="left:1843.5px;top:2318.5px;font-size:27px;line-height:27px;color:#333;transform:scaleX(0.9689);">Post transaction and close</div>
<svg style="left:130px;top:2120px" width="310" height="310" viewBox="130 2120 310 310">
<rect x="342.4" y="2131" width="86.5" height="287" rx="22" fill="#a6a6a6"/>
<rect x="370" y="2150.8" width="29.3" height="247.6" rx="4" fill="#546282"/>
<defs><clipPath id="cb"><ellipse cx="262" cy="2275" rx="121" ry="139"/></clipPath><clipPath id="cf"><rect x="130" y="2120" width="269.4" height="310"/></clipPath></defs>
<ellipse cx="262" cy="2275" rx="121" ry="139" fill="#efbd68"/>
<g clip-path="url(#cb)" fill="#f4d089">
<rect x="130" y="2150" width="300" height="9"/><rect x="130" y="2177" width="300" height="9"/><rect x="130" y="2204" width="300" height="9"/>
<rect x="130" y="2231" width="300" height="9"/><rect x="130" y="2258" width="300" height="9"/><rect x="130" y="2285" width="300" height="9"/>
<rect x="130" y="2312" width="300" height="9"/><rect x="130" y="2339" width="300" height="9"/><rect x="130" y="2366" width="300" height="9"/><rect x="130" y="2393" width="300" height="9"/>
</g>
<path d="M286.0 2135.6 C302.7 2135.3 321.3 2138.9 335.0 2143.0 C348.7 2147.1 358.5 2152.5 368.0 2160.0 C377.5 2167.5 386.2 2177.2 392.0 2188.0 C397.8 2198.8 401.0 2210.5 403.0 2225.0 C405.0 2239.5 404.0 2258.3 404.0 2275.0 C404.0 2291.7 405.0 2310.5 403.0 2325.0 C401.0 2339.5 397.8 2351.2 392.0 2362.0 C386.2 2372.8 377.5 2382.5 368.0 2390.0 C358.5 2397.5 349.0 2403.0 335.0 2407.0 C321.0 2411.0 300.7 2414.3 284.0 2414.0 C267.3 2413.7 249.0 2411.0 235.0 2405.0 C221.0 2399.0 209.5 2390.2 200.0 2378.0 C190.5 2365.8 182.9 2349.2 178.0 2332.0 C173.1 2314.8 170.8 2294.0 170.8 2275.0 C170.8 2256.0 173.1 2235.2 178.0 2218.0 C182.9 2200.8 190.5 2184.2 200.0 2172.0 C209.5 2159.8 220.7 2151.1 235.0 2145.0 C249.3 2138.9 269.3 2135.9 286.0 2135.6Z" fill="#f5d699" clip-path="url(#cf)"/>
<ellipse cx="294" cy="2274" rx="95" ry="110" fill="none" stroke="#efc46f" stroke-width="8" stroke-linecap="round" stroke-dasharray="9 22"/>
</svg>
</body></html>
